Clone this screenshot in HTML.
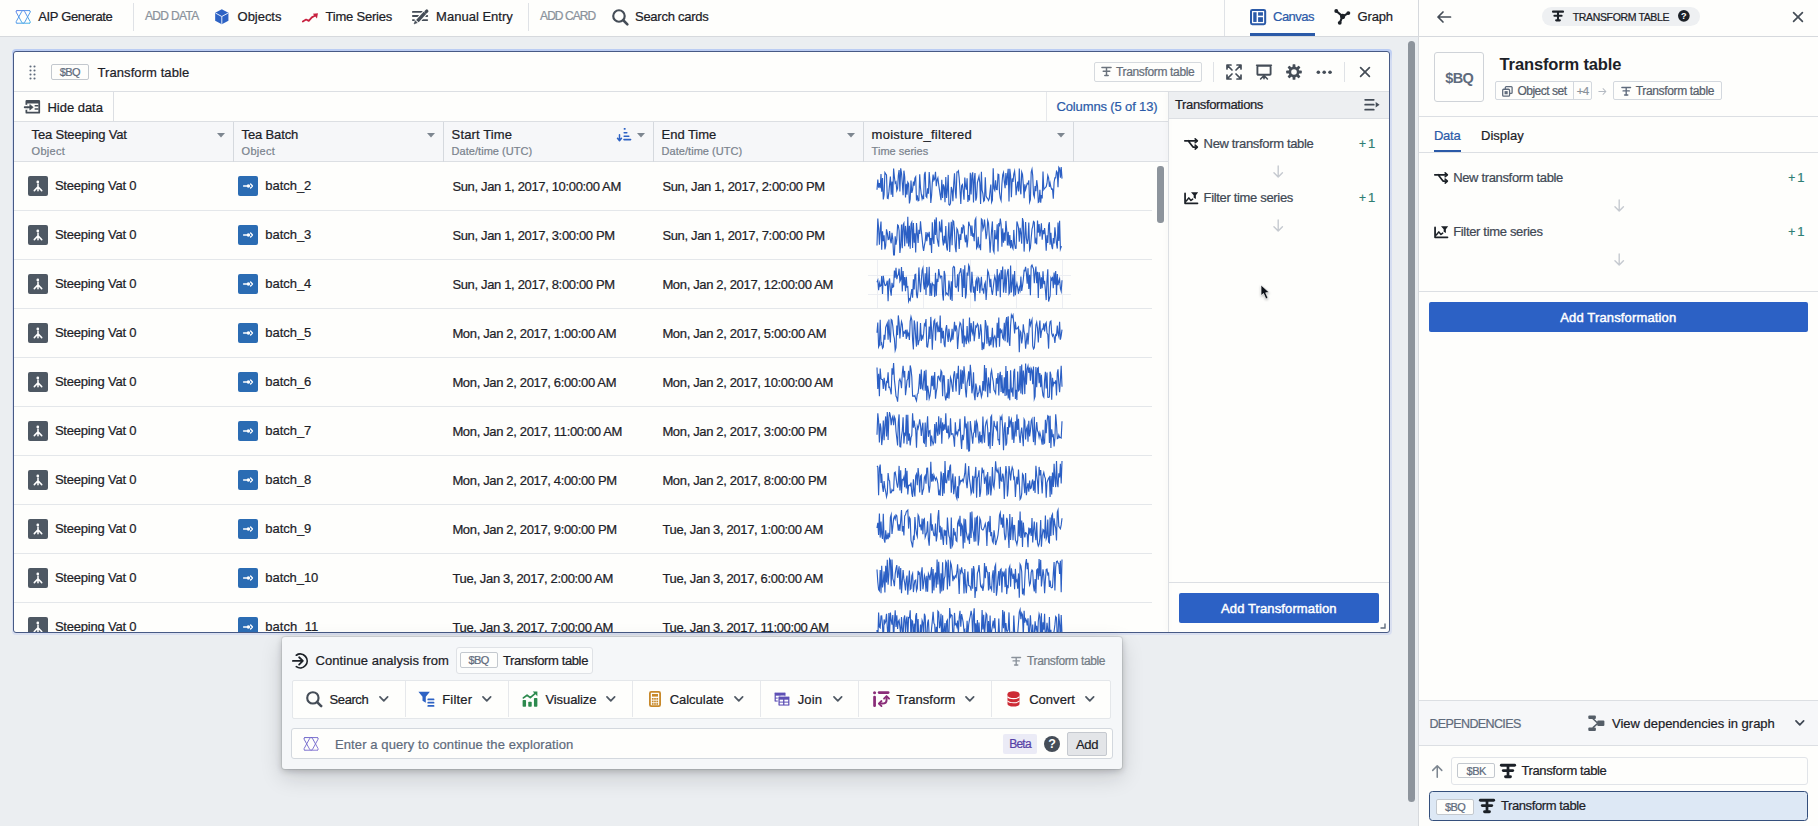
<!DOCTYPE html>
<html lang="en"><head><meta charset="utf-8"><title>Transform table</title>
<style>
html,body{margin:0;padding:0}
body{width:1818px;height:826px;position:relative;overflow:hidden;background:#ebeef1;font-family:"Liberation Sans", "DejaVu Sans", sans-serif;font-size:13px;color:#1c2127}
body div,body svg,body span{position:absolute;box-sizing:border-box}
body span{white-space:pre;-webkit-text-stroke:0.22px}
svg{overflow:visible}
</style></head>
<body>
<div style="left:0px;top:0px;width:1818px;height:37px;background:#fefefc;border-bottom:1px solid #d6d9dd"></div>
<svg style="left:15px;top:10px;" width="16.4" height="13.8" viewBox="0 0 16 14"><defs><linearGradient id="ga15" x1="0" y1="0" x2="1" y2="1"><stop offset="0" stop-color="#5b7fe8"/><stop offset="1" stop-color="#46b4e8"/></linearGradient></defs><g fill="none" stroke="url(#ga15)" stroke-width="1.0" stroke-linecap="round" stroke-linejoin="round"><path d="M1.6 0.6H14.4M1.6 13.4H14.4"/><path d="M1.6 0.6Q0.2 0.8 0.9 2.2L6.6 12.6Q7 13.4 7.6 13.4M7.6 0.6Q7 0.6 6.6 1.4L0.9 11.8Q0.2 13.2 1.6 13.4"/><path d="M14.4 0.6Q15.8 0.8 15.1 2.2L9.4 12.6Q9 13.4 8.4 13.4M8.4 0.6Q9 0.6 9.4 1.4L15.1 11.8Q15.8 13.2 14.4 13.4"/></g></svg>
<span style="left:38.30px;top:9.00px;font-size:13px;line-height:16px;color:#1c2127;letter-spacing:-0.362px;">AIP Generate</span>
<div style="left:133px;top:3px;width:1px;height:28px;background:#dfe2e6"></div>
<span style="left:145.00px;top:8.00px;font-size:12px;line-height:16px;color:#8a929b;letter-spacing:-0.676px;">ADD DATA</span>
<svg style="left:214.4px;top:8.8px;" width="15.6" height="15.6" viewBox="0 0 16 16"><path d="M8 0.3L14.8 3.9V12.1L8 15.7L1.2 12.1V3.9Z" fill="#2d62c4"/><path d="M1.6 4.2L8 7.7L14.4 4.2M8 7.7V15.3" fill="none" stroke="#e8effa" stroke-width="1"/></svg>
<span style="left:237.60px;top:9.00px;font-size:13px;line-height:16px;color:#1c2127;letter-spacing:-0.040px;">Objects</span>
<svg style="left:302px;top:9.6px;" width="16.4" height="16.4" viewBox="0 0 16 16"><path d="M0.8 11.3L4 9.3L6.6 10.6L9.6 7.2L12.6 5.6" fill="none" stroke="#c8213f" stroke-width="1.7" stroke-linecap="round" stroke-linejoin="round"/><path d="M10.6 3.6L15.6 3.2L14.6 8.2Z" fill="#c8213f"/></svg>
<span style="left:325.50px;top:9.00px;font-size:13px;line-height:16px;color:#1c2127;letter-spacing:-0.207px;">Time Series</span>
<svg style="left:412px;top:9.9px;" width="16" height="14" viewBox="0 0 16 14"><g stroke="#454d57" stroke-width="1.9" stroke-linecap="round"><path d="M0.9 1.9H10M0.9 6H6.2M14 6H15.2M0.9 10.1H2M10.2 10.1H15.2"/></g><path d="M12.9 2.9L5.4 11.1" stroke="#fefefc" stroke-width="5.4" stroke-linecap="butt"/><path d="M12.9 2.9L5.4 11.1" stroke="#454d57" stroke-width="3.5" stroke-linecap="butt"/><path d="M14 1.9L14.8 1.1" stroke="#454d57" stroke-width="3.3" stroke-linecap="round"/><path d="M2 14L3.2 10.7L5.3 12.7Z" fill="#454d57" stroke="#454d57" stroke-width="0.5" stroke-linejoin="round"/></svg>
<span style="left:436.10px;top:9.00px;font-size:13px;line-height:16px;color:#1c2127;letter-spacing:0.009px;">Manual Entry</span>
<div style="left:528px;top:3px;width:1px;height:28px;background:#dfe2e6"></div>
<span style="left:540.10px;top:8.00px;font-size:12px;line-height:16px;color:#8a929b;letter-spacing:-0.959px;">ADD CARD</span>
<svg style="left:612px;top:9px;" width="16.4" height="16.4" viewBox="0 0 16 16"><circle cx="6.8" cy="6.8" r="5.6" fill="none" stroke="#454d57" stroke-width="2.1"/><path d="M11 11L15 15" stroke="#454d57" stroke-width="2.5" stroke-linecap="round"/></svg>
<span style="left:635.00px;top:9.00px;font-size:13px;line-height:16px;color:#1c2127;letter-spacing:-0.266px;">Search cards</span>
<div style="left:1224px;top:0px;width:1px;height:36px;background:#dfe2e6"></div>
<svg style="left:1250px;top:9px;" width="16.2" height="16.2" viewBox="0 0 16 16"><rect x="1" y="1" width="14" height="14" rx="1.3" fill="#fff" stroke="#2b5aa8" stroke-width="2"/><rect x="3.2" y="3.2" width="3.3" height="9.6" fill="#2b5aa8"/><rect x="8" y="3.2" width="4.8" height="3.4" fill="#2b5aa8"/><rect x="8" y="8.1" width="4.8" height="4.7" fill="#2b5aa8"/></svg>
<span style="left:1273.00px;top:9.00px;font-size:13px;line-height:16px;color:#2b5aa8;letter-spacing:-0.513px;">Canvas</span>
<div style="left:1250px;top:33px;width:65px;height:3px;background:#2b5aa8"></div>
<svg style="left:1334px;top:8.6px;" width="16.4" height="16.4" viewBox="0 0 16 16"><path d="M2.2 1.9L8.4 7.2L14 4M8.4 7.2L5.6 13.4" fill="none" stroke="#1c2127" stroke-width="2.1"/><circle cx="2.2" cy="1.9" r="1.9" fill="#1c2127"/><circle cx="14" cy="4" r="1.9" fill="#1c2127"/><circle cx="5.6" cy="13.5" r="1.9" fill="#1c2127"/><circle cx="8.4" cy="7.2" r="2.5" fill="#1c2127"/></svg>
<span style="left:1357.60px;top:9.00px;font-size:13px;line-height:16px;color:#1c2127;letter-spacing:-0.188px;">Graph</span>
<div style="left:1408px;top:41px;width:7px;height:760.5px;background:#8d949c;border-radius:4px"></div>
<div style="left:11.5px;top:49px;width:1380px;height:585.5px;border-radius:4px;background:linear-gradient(#b9cbf3,#d3dcf2 12px,#d9dff0)"></div>
<div style="left:13px;top:51px;width:1377px;height:582px;border-radius:3px;background:#fefefc;border:1px solid #475a85"></div>
<div style="left:14px;top:52px;width:1375px;height:580px;overflow:hidden;border-radius:2px">
<svg style="left:15px;top:12.9px;" width="7" height="15" viewBox="0 0 7 15"><circle cx="1.5" cy="1.5" r="1.05" fill="#5f6b7c"/><circle cx="1.5" cy="5.5" r="1.05" fill="#5f6b7c"/><circle cx="1.5" cy="9.5" r="1.05" fill="#5f6b7c"/><circle cx="1.5" cy="13.5" r="1.05" fill="#5f6b7c"/><circle cx="5.5" cy="1.5" r="1.05" fill="#5f6b7c"/><circle cx="5.5" cy="5.5" r="1.05" fill="#5f6b7c"/><circle cx="5.5" cy="9.5" r="1.05" fill="#5f6b7c"/><circle cx="5.5" cy="13.5" r="1.05" fill="#5f6b7c"/></svg>
<div style="left:37.4px;top:12.4px;width:37.2px;height:15.2px;border:1px solid #c3c8ce;border-radius:2px;background:#fefefc"></div>
<span style="left:45.75px;top:12.00px;font-size:11px;line-height:16px;color:#5f6b7c;letter-spacing:-0.572px;">$BQ</span>
<span style="left:83.50px;top:13.00px;font-size:13px;line-height:16px;color:#1c2127;letter-spacing:0.082px;">Transform table</span>
<div style="left:1080.4px;top:10.3px;width:107.2px;height:19.5px;border:1px solid #d6dade;border-radius:2px;background:#fefefc"></div>
<svg style="left:1086.8px;top:14.2px;" width="11" height="11" viewBox="0 0 16 16"><g stroke="#6b737d" stroke-linecap="round" fill="none"><path d="M1.4 2.2H14.6" stroke-width="2.30"/><path d="M3.2 7.6H12.8" stroke-width="2.10"/><path d="M5.6 13.8H10.4" stroke-width="2.30"/><path d="M8 2.6V13.4" stroke-width="2.10"/></g></svg>
<span style="left:1102.00px;top:12.00px;font-size:12px;line-height:16px;color:#656e79;letter-spacing:-0.346px;">Transform table</span>
<div style="left:1199px;top:10px;width:1px;height:20px;background:#dfe2e6"></div>
<svg style="left:1212px;top:12px;" width="16" height="16" viewBox="0 0 16 16"><g fill="none" stroke="#454d57" stroke-width="1.7" stroke-linecap="round" stroke-linejoin="round"><path d="M1 5V1H5M1.3 1.3L6 6M11 1H15V5M14.7 1.3L10 6M1 11V15H5M1.3 14.7L6 10M15 11V15H11M14.7 14.7L10 10"/></g></svg>
<svg style="left:1242.2px;top:12px;" width="16" height="16" viewBox="0 0 16 16"><rect x="1.4" y="1.9" width="13.2" height="8.8" rx="0.8" fill="none" stroke="#454d57" stroke-width="1.9"/><path d="M0.6 1.2H15.4" stroke="#454d57" stroke-width="1.6" stroke-linecap="round"/><path d="M8 11V14.8M8 11.5L4.6 15M8 11.5L11.4 15" fill="none" stroke="#454d57" stroke-width="1.6" stroke-linecap="round"/></svg>
<svg style="left:1272px;top:12px;" width="16" height="16" viewBox="0 0 16 16"><rect x="6.6" y="0.2" width="2.8" height="4" rx="0.6" fill="#454d57" transform="rotate(0 8 8)"/><rect x="6.6" y="0.2" width="2.8" height="4" rx="0.6" fill="#454d57" transform="rotate(45 8 8)"/><rect x="6.6" y="0.2" width="2.8" height="4" rx="0.6" fill="#454d57" transform="rotate(90 8 8)"/><rect x="6.6" y="0.2" width="2.8" height="4" rx="0.6" fill="#454d57" transform="rotate(135 8 8)"/><rect x="6.6" y="0.2" width="2.8" height="4" rx="0.6" fill="#454d57" transform="rotate(180 8 8)"/><rect x="6.6" y="0.2" width="2.8" height="4" rx="0.6" fill="#454d57" transform="rotate(225 8 8)"/><rect x="6.6" y="0.2" width="2.8" height="4" rx="0.6" fill="#454d57" transform="rotate(270 8 8)"/><rect x="6.6" y="0.2" width="2.8" height="4" rx="0.6" fill="#454d57" transform="rotate(315 8 8)"/><circle cx="8" cy="8" r="4.1" fill="none" stroke="#454d57" stroke-width="2.6"/></svg>
<svg style="left:1301.6px;top:12px;" width="16.4" height="16.4" viewBox="0 0 16 16"><circle cx="2.3" cy="8" r="1.75" fill="#454d57"/><circle cx="8" cy="8" r="1.75" fill="#454d57"/><circle cx="13.7" cy="8" r="1.75" fill="#454d57"/></svg>
<div style="left:1330px;top:10px;width:1px;height:20px;background:#dfe2e6"></div>
<svg style="left:1343px;top:12px;" width="16" height="16" viewBox="0 0 16 16"><path d="M3.6 3.6L12.4 12.4M12.4 3.6L3.6 12.4" stroke="#454d57" stroke-width="1.7" stroke-linecap="round"/></svg>
<div style="left:0px;top:39px;width:1375px;height:1px;background:#dcdfe3"></div>
<svg style="left:10.6px;top:47.2px;" width="15.6" height="15.6" viewBox="0 0 16 16"><path fill-rule="evenodd" d="M1.7 1H14.3A1.2 1.2 0 0 1 15.5 2.2V13.8A1.2 1.2 0 0 1 14.3 15H1.7A1.2 1.2 0 0 1 0.5 13.8V2.2A1.2 1.2 0 0 1 1.7 1ZM2.3 4.5V13.2H13.7V4.5Z" fill="#454d57"/><rect x="0" y="6" width="2.6" height="5" fill="#fefefc"/><path d="M-0.3 8.5H6" stroke="#454d57" stroke-width="1.9" stroke-linecap="round"/><path d="M4.9 5.6L8.5 8.5L4.9 11.4Z" fill="#454d57" stroke="#454d57" stroke-width="0.6" stroke-linejoin="round"/><path d="M9.9 7H13.8M9.9 10.2H13.8" stroke="#454d57" stroke-width="1.5"/></svg>
<span style="left:33.50px;top:48.00px;font-size:13px;line-height:16px;color:#1c2127;letter-spacing:-0.028px;">Hide data</span>
<div style="left:99px;top:40px;width:1px;height:30px;background:#dcdfe3"></div>
<div style="left:1032px;top:40px;width:1px;height:29px;background:#e6e8eb"></div>
<span style="left:1042.50px;top:47.00px;font-size:13px;line-height:16px;color:#2b5aa8;letter-spacing:-0.137px;">Columns (5 of 13)</span>
<div style="left:0px;top:69px;width:1154.5px;height:41px;background:#f6f7f9;border-top:1px solid #dcdfe3;border-bottom:1px solid #dcdfe3"></div>
<span style="left:17.60px;top:75.00px;font-size:13px;line-height:16px;color:#1c2127;letter-spacing:-0.185px;">Tea Steeping Vat</span>
<span style="left:17.60px;top:91.00px;font-size:11px;line-height:16px;color:#7a838d;letter-spacing:0.284px;">Object</span>
<div style="left:219.4px;top:70px;width:1px;height:39.5px;background:#d5d9de"></div>
<svg style="left:203px;top:81px;" width="8" height="5" viewBox="0 0 8 5"><path d="M0 0H8L4 4.6Z" fill="#7d8690"/></svg>
<span style="left:227.60px;top:75.00px;font-size:13px;line-height:16px;color:#1c2127;letter-spacing:-0.148px;">Tea Batch</span>
<span style="left:227.60px;top:91.00px;font-size:11px;line-height:16px;color:#7a838d;letter-spacing:0.284px;">Object</span>
<div style="left:429.4px;top:70px;width:1px;height:39.5px;background:#d5d9de"></div>
<svg style="left:413px;top:81px;" width="8" height="5" viewBox="0 0 8 5"><path d="M0 0H8L4 4.6Z" fill="#7d8690"/></svg>
<span style="left:437.60px;top:75.00px;font-size:13px;line-height:16px;color:#1c2127;letter-spacing:0.125px;">Start Time</span>
<span style="left:437.60px;top:91.00px;font-size:11px;line-height:16px;color:#7a838d;letter-spacing:0.036px;">Date/time (UTC)</span>
<div style="left:639.4px;top:70px;width:1px;height:39.5px;background:#d5d9de"></div>
<svg style="left:623px;top:81px;" width="8" height="5" viewBox="0 0 8 5"><path d="M0 0H8L4 4.6Z" fill="#7d8690"/></svg>
<span style="left:647.60px;top:75.00px;font-size:13px;line-height:16px;color:#1c2127;letter-spacing:-0.040px;">End Time</span>
<span style="left:647.60px;top:91.00px;font-size:11px;line-height:16px;color:#7a838d;letter-spacing:0.036px;">Date/time (UTC)</span>
<div style="left:849.4px;top:70px;width:1px;height:39.5px;background:#d5d9de"></div>
<svg style="left:833px;top:81px;" width="8" height="5" viewBox="0 0 8 5"><path d="M0 0H8L4 4.6Z" fill="#7d8690"/></svg>
<span style="left:857.60px;top:75.00px;font-size:13px;line-height:16px;color:#1c2127;letter-spacing:0.258px;">moisture_filtered</span>
<span style="left:857.60px;top:91.00px;font-size:11px;line-height:16px;color:#7a838d;letter-spacing:0.015px;">Time series</span>
<div style="left:1059.4px;top:70px;width:1px;height:39.5px;background:#d5d9de"></div>
<svg style="left:1043px;top:81px;" width="8" height="5" viewBox="0 0 8 5"><path d="M0 0H8L4 4.6Z" fill="#7d8690"/></svg>
<svg style="left:602.8px;top:75.5px;" width="14.4" height="13.6" viewBox="0 0 14.4 13.6"><path d="M2.5 6.8V12.4M0.5 10.3L2.5 12.7L4.5 10.3" fill="none" stroke="#2d62c4" stroke-width="1.5" stroke-linecap="round" stroke-linejoin="round"/><g stroke="#2d62c4" stroke-width="1.6" stroke-linecap="round"><path d="M7.4 0.9H8M7.2 4.7H9.8M7.2 8.2H11.8M7 11.6H13.6"/></g></svg>
<svg style="left:14px;top:124px;" width="20" height="20" viewBox="0 0 20 20"><rect width="20" height="20" rx="2" fill="#4e5863"/><circle cx="9.8" cy="5.9" r="1.35" fill="#fff"/><path d="M10 8V11.6M10 10.8L6.3 14.6M10 10.8L13.7 14.6M10 11V14.8" fill="none" stroke="#fff" stroke-width="1.55" stroke-linecap="round"/></svg>
<span style="left:40.90px;top:126.00px;font-size:13px;line-height:16px;color:#1c2127;letter-spacing:-0.202px;">Steeping Vat 0</span>
<svg style="left:224px;top:124px;" width="20" height="20" viewBox="0 0 20 20"><rect width="20" height="20" rx="2" fill="#2b6cb3"/><path d="M5.6 10H8.6" stroke="#fff" stroke-width="1.4" stroke-linecap="round"/><circle cx="10.4" cy="10" r="1.75" fill="#fff"/><path d="M12.6 8L14.5 10L12.6 12" fill="none" stroke="#fff" stroke-width="1.3" stroke-linecap="round" stroke-linejoin="round"/></svg>
<span style="left:251.30px;top:126.00px;font-size:13px;line-height:16px;color:#1c2127;letter-spacing:-0.038px;">batch_2</span>
<span style="left:438.40px;top:127.00px;font-size:13px;line-height:16px;color:#1c2127;letter-spacing:-0.345px;">Sun, Jan 1, 2017, 10:00:00 AM</span>
<span style="left:648.40px;top:127.00px;font-size:13px;line-height:16px;color:#1c2127;letter-spacing:-0.344px;">Sun, Jan 1, 2017, 2:00:00 PM</span>
<svg style="left:863px;top:113.5px;" width="185" height="41" viewBox="0 0 185 41"><polyline points="0.0,23.7 0.8,13.6 1.6,21.7 2.4,17.1 3.2,22.2 4.0,8.1 4.7,25.8 5.5,12.1 6.3,33.4 7.1,28.8 7.9,6.6 8.7,7.9 9.5,8.9 10.3,32.1 11.1,32.6 11.9,25.9 12.6,18.4 13.4,10.5 14.2,28.7 15.0,15.5 15.8,31.0 16.6,2.6 17.4,11.0 18.2,17.2 19.0,16.0 19.8,24.6 20.6,22.5 21.3,9.5 22.1,4.0 22.9,25.6 23.7,2.3 24.5,7.0 25.3,17.1 26.1,29.2 26.9,4.7 27.7,10.7 28.5,31.5 29.3,17.9 30.0,28.8 30.8,16.3 31.6,17.7 32.4,37.5 33.2,33.1 34.0,14.6 34.8,26.9 35.6,23.9 36.4,15.5 37.2,19.7 37.9,12.2 38.7,10.8 39.5,34.5 40.3,29.4 41.1,34.9 41.9,34.4 42.7,8.3 43.5,21.9 44.3,28.2 45.1,33.0 45.9,30.3 46.6,33.2 47.4,8.5 48.2,5.8 49.0,30.4 49.8,31.4 50.6,22.2 51.4,27.7 52.2,6.1 53.0,16.5 53.8,36.9 54.6,29.2 55.3,16.9 56.1,8.5 56.9,14.4 57.7,12.9 58.5,5.9 59.3,20.1 60.1,13.9 60.9,11.8 61.7,18.5 62.5,24.1 63.2,29.2 64.0,34.2 64.8,13.7 65.6,31.9 66.4,18.3 67.2,21.2 68.0,36.2 68.8,11.1 69.6,31.9 70.4,24.0 71.2,8.9 71.9,38.4 72.7,39.1 73.5,37.4 74.3,21.0 75.1,24.0 75.9,35.1 76.7,18.3 77.5,7.3 78.3,25.1 79.1,32.5 79.9,6.1 80.6,6.0 81.4,4.8 82.2,12.1 83.0,24.1 83.8,38.0 84.6,19.6 85.4,18.5 86.2,25.3 87.0,33.8 87.8,11.5 88.5,19.6 89.3,23.6 90.1,12.3 90.9,36.0 91.7,29.1 92.5,34.4 93.3,6.7 94.1,28.4 94.9,9.4 95.7,6.3 96.5,36.4 97.2,13.7 98.0,7.0 98.8,34.7 99.6,31.4 100.4,16.6 101.2,13.5 102.0,10.3 102.8,16.8 103.6,38.1 104.4,5.8 105.1,24.1 105.9,27.7 106.7,35.4 107.5,34.4 108.3,11.3 109.1,30.1 109.9,31.8 110.7,32.5 111.5,34.4 112.3,32.5 113.1,24.9 113.8,18.6 114.6,36.2 115.4,34.1 116.2,2.2 117.0,22.7 117.8,24.5 118.6,14.2 119.4,23.6 120.2,23.7 121.0,8.2 121.8,8.6 122.5,26.4 123.3,32.1 124.1,34.6 124.9,18.3 125.7,8.9 126.5,6.5 127.3,15.8 128.1,22.3 128.9,7.1 129.7,19.1 130.4,9.6 131.2,2.8 132.0,35.4 132.8,2.7 133.6,9.6 134.4,31.3 135.2,12.4 136.0,16.0 136.8,8.2 137.6,5.1 138.4,14.2 139.1,29.3 139.9,21.2 140.7,15.6 141.5,25.5 142.3,2.5 143.1,22.9 143.9,28.3 144.7,6.1 145.5,8.4 146.3,18.4 147.1,32.2 147.8,18.3 148.6,23.6 149.4,20.4 150.2,17.4 151.0,17.9 151.8,14.3 152.6,36.1 153.4,33.7 154.2,6.1 155.0,3.3 155.7,9.5 156.5,28.4 157.3,31.0 158.1,20.1 158.9,25.1 159.7,14.2 160.5,19.7 161.3,36.3 162.1,35.6 162.9,23.9 163.7,36.8 164.4,29.0 165.2,32.4 166.0,5.5 166.8,23.6 167.6,22.3 168.4,21.6 169.2,20.7 170.0,17.2 170.8,9.5 171.6,11.9 172.4,20.8 173.1,17.0 173.9,21.1 174.7,23.2 175.5,23.0 176.3,32.7 177.1,16.2 177.9,11.8 178.7,11.8 179.5,5.3 180.3,6.4 181.0,21.2 181.8,1.2 182.6,2.4 183.4,11.8 184.2,1.0 185.0,12.6" fill="none" stroke="#2b5fc4" stroke-width="1.15" stroke-linejoin="miter" stroke-miterlimit="6"/></svg>
<div style="left:0px;top:158px;width:1138px;height:1px;background:#e4e7ea"></div>
<svg style="left:14px;top:173px;" width="20" height="20" viewBox="0 0 20 20"><rect width="20" height="20" rx="2" fill="#4e5863"/><circle cx="9.8" cy="5.9" r="1.35" fill="#fff"/><path d="M10 8V11.6M10 10.8L6.3 14.6M10 10.8L13.7 14.6M10 11V14.8" fill="none" stroke="#fff" stroke-width="1.55" stroke-linecap="round"/></svg>
<span style="left:40.90px;top:175.00px;font-size:13px;line-height:16px;color:#1c2127;letter-spacing:-0.202px;">Steeping Vat 0</span>
<svg style="left:224px;top:173px;" width="20" height="20" viewBox="0 0 20 20"><rect width="20" height="20" rx="2" fill="#2b6cb3"/><path d="M5.6 10H8.6" stroke="#fff" stroke-width="1.4" stroke-linecap="round"/><circle cx="10.4" cy="10" r="1.75" fill="#fff"/><path d="M12.6 8L14.5 10L12.6 12" fill="none" stroke="#fff" stroke-width="1.3" stroke-linecap="round" stroke-linejoin="round"/></svg>
<span style="left:251.30px;top:175.00px;font-size:13px;line-height:16px;color:#1c2127;letter-spacing:-0.038px;">batch_3</span>
<span style="left:438.40px;top:176.00px;font-size:13px;line-height:16px;color:#1c2127;letter-spacing:-0.344px;">Sun, Jan 1, 2017, 3:00:00 PM</span>
<span style="left:648.40px;top:176.00px;font-size:13px;line-height:16px;color:#1c2127;letter-spacing:-0.344px;">Sun, Jan 1, 2017, 7:00:00 PM</span>
<svg style="left:863px;top:162.5px;" width="185" height="41" viewBox="0 0 185 41"><polyline points="0.0,30.5 0.8,3.5 1.6,13.1 2.4,29.8 3.2,14.9 4.0,6.6 4.7,34.7 5.5,16.3 6.3,26.1 7.1,20.4 7.9,34.5 8.7,30.8 9.5,14.3 10.3,17.8 11.1,24.6 11.9,24.1 12.6,16.0 13.4,25.1 14.2,28.3 15.0,17.9 15.8,24.1 16.6,40.0 17.4,40.0 18.2,21.2 19.0,29.6 19.8,24.2 20.6,10.0 21.3,10.6 22.1,15.5 22.9,38.0 23.7,30.7 24.5,9.5 25.3,33.3 26.1,10.0 26.9,8.2 27.7,31.2 28.5,10.9 29.3,19.2 30.0,28.4 30.8,1.7 31.6,31.4 32.4,10.8 33.2,33.7 34.0,9.0 34.8,7.2 35.6,33.0 36.4,8.0 37.2,27.8 37.9,18.2 38.7,37.5 39.5,8.1 40.3,18.1 41.1,27.9 41.9,14.9 42.7,19.0 43.5,6.2 44.3,15.9 45.1,23.1 45.9,31.6 46.6,35.8 47.4,30.3 48.2,26.5 49.0,17.1 49.8,26.3 50.6,19.0 51.4,20.8 52.2,16.9 53.0,30.1 53.8,23.0 54.6,37.9 55.3,7.3 56.1,24.3 56.9,28.9 57.7,4.6 58.5,19.9 59.3,2.4 60.1,22.6 60.9,27.7 61.7,31.7 62.5,6.4 63.2,14.5 64.0,17.4 64.8,4.6 65.6,24.8 66.4,30.5 67.2,20.7 68.0,28.4 68.8,11.0 69.6,32.0 70.4,35.5 71.2,19.1 71.9,7.4 72.7,36.9 73.5,21.9 74.3,6.8 75.1,30.2 75.9,5.6 76.7,6.5 77.5,16.5 78.3,32.1 79.1,37.2 79.9,13.6 80.6,14.9 81.4,19.7 82.2,34.0 83.0,19.3 83.8,24.9 84.6,12.2 85.4,18.5 86.2,10.1 87.0,11.1 87.8,23.5 88.5,27.3 89.3,19.7 90.1,32.4 90.9,24.2 91.7,6.7 92.5,9.9 93.3,11.1 94.1,21.0 94.9,10.5 95.7,21.8 96.5,18.4 97.2,26.3 98.0,5.3 98.8,3.4 99.6,33.3 100.4,31.7 101.2,21.9 102.0,31.9 102.8,30.6 103.6,35.2 104.4,4.0 105.1,4.8 105.9,14.4 106.7,11.6 107.5,4.6 108.3,13.2 109.1,24.2 109.9,18.9 110.7,5.5 111.5,8.1 112.3,21.4 113.1,37.7 113.8,27.3 114.6,15.3 115.4,6.4 116.2,34.9 117.0,37.2 117.8,15.0 118.6,23.8 119.4,23.9 120.2,9.3 121.0,36.5 121.8,8.0 122.5,11.5 123.3,3.5 124.1,9.2 124.9,31.8 125.7,13.4 126.5,27.8 127.3,17.6 128.1,25.9 128.9,5.9 129.7,15.0 130.4,30.5 131.2,16.9 132.0,30.6 132.8,20.0 133.6,33.2 134.4,25.1 135.2,31.9 136.0,33.7 136.8,14.9 137.6,29.0 138.4,33.3 139.1,33.2 139.9,6.4 140.7,9.2 141.5,12.9 142.3,26.6 143.1,12.8 143.9,18.0 144.7,28.8 145.5,3.0 146.3,6.9 147.1,36.6 147.8,24.1 148.6,7.1 149.4,23.0 150.2,28.8 151.0,24.1 151.8,7.5 152.6,35.0 153.4,33.0 154.2,23.2 155.0,14.1 155.7,11.6 156.5,6.5 157.3,7.3 158.1,28.5 158.9,24.7 159.7,29.3 160.5,5.5 161.3,17.8 162.1,9.1 162.9,21.5 163.7,15.3 164.4,8.4 165.2,24.7 166.0,15.2 166.8,19.2 167.6,13.1 168.4,21.0 169.2,35.6 170.0,20.2 170.8,28.0 171.6,10.1 172.4,7.2 173.1,29.7 173.9,17.9 174.7,30.9 175.5,34.2 176.3,23.1 177.1,28.5 177.9,12.3 178.7,20.7 179.5,28.9 180.3,33.6 181.0,7.6 181.8,26.0 182.6,5.8 183.4,34.0 184.2,31.6 185.0,31.7" fill="none" stroke="#2b5fc4" stroke-width="1.15" stroke-linejoin="miter" stroke-miterlimit="6"/></svg>
<div style="left:0px;top:207px;width:1138px;height:1px;background:#e4e7ea"></div>
<svg style="left:14px;top:222px;" width="20" height="20" viewBox="0 0 20 20"><rect width="20" height="20" rx="2" fill="#4e5863"/><circle cx="9.8" cy="5.9" r="1.35" fill="#fff"/><path d="M10 8V11.6M10 10.8L6.3 14.6M10 10.8L13.7 14.6M10 11V14.8" fill="none" stroke="#fff" stroke-width="1.55" stroke-linecap="round"/></svg>
<span style="left:40.90px;top:224.00px;font-size:13px;line-height:16px;color:#1c2127;letter-spacing:-0.202px;">Steeping Vat 0</span>
<svg style="left:224px;top:222px;" width="20" height="20" viewBox="0 0 20 20"><rect width="20" height="20" rx="2" fill="#2b6cb3"/><path d="M5.6 10H8.6" stroke="#fff" stroke-width="1.4" stroke-linecap="round"/><circle cx="10.4" cy="10" r="1.75" fill="#fff"/><path d="M12.6 8L14.5 10L12.6 12" fill="none" stroke="#fff" stroke-width="1.3" stroke-linecap="round" stroke-linejoin="round"/></svg>
<span style="left:251.30px;top:224.00px;font-size:13px;line-height:16px;color:#1c2127;letter-spacing:-0.038px;">batch_4</span>
<span style="left:438.40px;top:225.00px;font-size:13px;line-height:16px;color:#1c2127;letter-spacing:-0.344px;">Sun, Jan 1, 2017, 8:00:00 PM</span>
<span style="left:648.40px;top:225.00px;font-size:13px;line-height:16px;color:#1c2127;letter-spacing:-0.349px;">Mon, Jan 2, 2017, 12:00:00 AM</span>
<div style="left:862.8px;top:207.5px;width:1px;height:48px;background:#eceef2"></div>
<div style="left:909.2px;top:207.5px;width:1px;height:48px;background:#eceef2"></div>
<div style="left:955.6px;top:207.5px;width:1px;height:48px;background:#eceef2"></div>
<div style="left:1001.8px;top:207.5px;width:1px;height:48px;background:#eceef2"></div>
<div style="left:1048px;top:207.5px;width:1px;height:48px;background:#eceef2"></div>
<div style="left:854px;top:222.7px;width:203px;height:1px;background:#eceef2"></div>
<div style="left:854px;top:241.6px;width:203px;height:1px;background:#eceef2"></div>
<svg style="left:863px;top:211.5px;" width="185" height="41" viewBox="0 0 185 41"><polyline points="0.0,18.2 0.8,16.2 1.6,26.3 2.4,19.1 3.2,22.4 4.0,21.6 4.7,12.1 5.5,30.0 6.3,11.9 7.1,17.5 7.9,21.3 8.7,21.5 9.5,19.7 10.3,16.7 11.1,37.2 11.9,17.2 12.6,14.5 13.4,26.2 14.2,31.7 15.0,18.8 15.8,23.2 16.6,22.6 17.4,6.5 18.2,13.6 19.0,3.7 19.8,15.2 20.6,11.7 21.3,10.7 22.1,4.7 22.9,17.4 23.7,15.7 24.5,3.0 25.3,27.4 26.1,7.0 26.9,21.5 27.7,13.1 28.5,27.2 29.3,12.8 30.0,23.0 30.8,22.6 31.6,37.2 32.4,34.9 33.2,36.2 34.0,30.1 34.8,25.1 35.6,33.7 36.4,15.2 37.2,25.5 37.9,10.9 38.7,10.3 39.5,30.3 40.3,34.1 41.1,24.7 41.9,3.4 42.7,18.5 43.5,28.1 44.3,16.8 45.1,6.3 45.9,4.0 46.6,20.0 47.4,25.5 48.2,9.2 49.0,30.9 49.8,3.0 50.6,22.1 51.4,20.6 52.2,2.8 53.0,31.9 53.8,19.3 54.6,31.8 55.3,19.2 56.1,20.9 56.9,20.8 57.7,32.9 58.5,8.7 59.3,31.7 60.1,14.8 60.9,18.0 61.7,5.1 62.5,10.5 63.2,13.9 64.0,12.1 64.8,12.4 65.6,30.1 66.4,36.6 67.2,6.9 68.0,10.9 68.8,30.5 69.6,29.1 70.4,30.1 71.2,31.2 71.9,16.5 72.7,23.7 73.5,35.7 74.3,17.3 75.1,37.0 75.9,4.0 76.7,2.5 77.5,3.3 78.3,22.6 79.1,23.5 79.9,21.9 80.6,10.2 81.4,27.7 82.2,9.4 83.0,8.0 83.8,4.1 84.6,12.5 85.4,32.9 86.2,5.2 87.0,24.1 87.8,1.2 88.5,34.4 89.3,29.8 90.1,8.5 90.9,11.7 91.7,1.0 92.5,3.1 93.3,25.6 94.1,28.5 94.9,7.8 95.7,19.9 96.5,28.7 97.2,22.5 98.0,37.2 98.8,17.3 99.6,15.1 100.4,27.0 101.2,13.4 102.0,14.6 102.8,29.2 103.6,20.8 104.4,12.7 105.1,25.8 105.9,25.1 106.7,29.7 107.5,20.7 108.3,18.5 109.1,35.9 109.9,24.6 110.7,6.7 111.5,8.7 112.3,14.3 113.1,23.1 113.8,14.9 114.6,27.0 115.4,31.0 116.2,24.0 117.0,17.3 117.8,12.2 118.6,15.5 119.4,31.8 120.2,5.1 121.0,27.3 121.8,11.8 122.5,10.4 123.3,33.3 124.1,6.1 124.9,15.2 125.7,2.6 126.5,28.6 127.3,21.5 128.1,5.4 128.9,28.9 129.7,14.0 130.4,8.2 131.2,5.0 132.0,29.9 132.8,28.5 133.6,1.4 134.4,28.5 135.2,19.2 136.0,10.4 136.8,32.6 137.6,7.0 138.4,31.2 139.1,23.1 139.9,19.3 140.7,24.2 141.5,29.8 142.3,23.6 143.1,26.3 143.9,12.5 144.7,27.0 145.5,21.9 146.3,15.5 147.1,6.4 147.8,6.8 148.6,2.8 149.4,9.3 150.2,19.7 151.0,4.3 151.8,25.0 152.6,10.7 153.4,31.2 154.2,2.2 155.0,1.0 155.7,3.0 156.5,4.8 157.3,19.3 158.1,9.4 158.9,2.6 159.7,19.1 160.5,7.8 161.3,33.9 162.1,8.2 162.9,12.8 163.7,25.0 164.4,13.2 165.2,24.2 166.0,7.4 166.8,20.2 167.6,16.7 168.4,26.2 169.2,36.1 170.0,16.2 170.8,5.3 171.6,37.6 172.4,34.7 173.1,32.0 173.9,14.1 174.7,15.8 175.5,12.7 176.3,24.3 177.1,8.6 177.9,20.7 178.7,7.0 179.5,31.1 180.3,10.1 181.0,21.0 181.8,17.5 182.6,15.0 183.4,24.3 184.2,27.2 185.0,16.3" fill="none" stroke="#2b5fc4" stroke-width="1.15" stroke-linejoin="miter" stroke-miterlimit="6"/></svg>
<div style="left:0px;top:256px;width:1138px;height:1px;background:#e4e7ea"></div>
<svg style="left:14px;top:271px;" width="20" height="20" viewBox="0 0 20 20"><rect width="20" height="20" rx="2" fill="#4e5863"/><circle cx="9.8" cy="5.9" r="1.35" fill="#fff"/><path d="M10 8V11.6M10 10.8L6.3 14.6M10 10.8L13.7 14.6M10 11V14.8" fill="none" stroke="#fff" stroke-width="1.55" stroke-linecap="round"/></svg>
<span style="left:40.90px;top:273.00px;font-size:13px;line-height:16px;color:#1c2127;letter-spacing:-0.202px;">Steeping Vat 0</span>
<svg style="left:224px;top:271px;" width="20" height="20" viewBox="0 0 20 20"><rect width="20" height="20" rx="2" fill="#2b6cb3"/><path d="M5.6 10H8.6" stroke="#fff" stroke-width="1.4" stroke-linecap="round"/><circle cx="10.4" cy="10" r="1.75" fill="#fff"/><path d="M12.6 8L14.5 10L12.6 12" fill="none" stroke="#fff" stroke-width="1.3" stroke-linecap="round" stroke-linejoin="round"/></svg>
<span style="left:251.30px;top:273.00px;font-size:13px;line-height:16px;color:#1c2127;letter-spacing:-0.038px;">batch_5</span>
<span style="left:438.40px;top:274.00px;font-size:13px;line-height:16px;color:#1c2127;letter-spacing:-0.347px;">Mon, Jan 2, 2017, 1:00:00 AM</span>
<span style="left:648.40px;top:274.00px;font-size:13px;line-height:16px;color:#1c2127;letter-spacing:-0.347px;">Mon, Jan 2, 2017, 5:00:00 AM</span>
<svg style="left:863px;top:260.5px;" width="185" height="41" viewBox="0 0 185 41"><polyline points="0.0,19.7 0.8,9.6 1.6,33.9 2.4,32.1 3.2,6.8 4.0,31.3 4.7,30.2 5.5,35.3 6.3,34.1 7.1,21.7 7.9,26.7 8.7,14.3 9.5,12.3 10.3,10.2 11.1,26.8 11.9,6.5 12.6,21.7 13.4,29.4 14.2,6.5 15.0,7.3 15.8,13.4 16.6,22.1 17.4,25.7 18.2,37.3 19.0,34.7 19.8,12.6 20.6,22.1 21.3,2.4 22.1,9.8 22.9,25.4 23.7,15.2 24.5,8.6 25.3,11.4 26.1,24.0 26.9,19.0 27.7,20.0 28.5,16.8 29.3,26.0 30.0,16.5 30.8,22.6 31.6,20.5 32.4,27.0 33.2,8.3 34.0,3.7 34.8,6.8 35.6,27.1 36.4,36.4 37.2,7.4 37.9,11.8 38.7,24.9 39.5,33.6 40.3,8.5 41.1,32.1 41.9,28.1 42.7,26.4 43.5,10.0 44.3,28.0 45.1,23.1 45.9,25.2 46.6,20.9 47.4,11.1 48.2,12.4 49.0,6.1 49.8,33.7 50.6,34.1 51.4,27.9 52.2,13.5 53.0,26.1 53.8,3.9 54.6,17.7 55.3,36.7 56.1,18.2 56.9,8.1 57.7,6.7 58.5,27.6 59.3,10.5 60.1,9.6 60.9,19.2 61.7,14.6 62.5,19.1 63.2,2.4 64.0,30.3 64.8,14.8 65.6,25.4 66.4,17.9 67.2,31.3 68.0,34.2 68.8,16.4 69.6,12.0 70.4,22.3 71.2,28.9 71.9,15.8 72.7,23.3 73.5,28.1 74.3,26.8 75.1,15.9 75.9,26.7 76.7,18.8 77.5,8.9 78.3,18.5 79.1,12.3 79.9,16.9 80.6,35.9 81.4,24.8 82.2,14.7 83.0,9.6 83.8,10.9 84.6,17.5 85.4,30.5 86.2,5.7 87.0,34.1 87.8,22.6 88.5,25.6 89.3,31.2 90.1,13.1 90.9,27.0 91.7,28.9 92.5,4.5 93.3,28.5 94.1,10.1 94.9,18.2 95.7,20.7 96.5,8.2 97.2,28.2 98.0,21.1 98.8,13.0 99.6,13.9 100.4,10.9 101.2,12.5 102.0,25.9 102.8,21.1 103.6,11.4 104.4,18.1 105.1,37.1 105.9,29.4 106.7,36.1 107.5,29.6 108.3,7.0 109.1,11.1 109.9,30.7 110.7,12.5 111.5,27.9 112.3,33.2 113.1,24.1 113.8,32.2 114.6,26.2 115.4,14.7 116.2,34.5 117.0,24.6 117.8,22.9 118.6,26.0 119.4,34.5 120.2,9.8 121.0,25.0 121.8,4.5 122.5,33.8 123.3,15.4 124.1,19.0 124.9,17.4 125.7,24.8 126.5,26.0 127.3,9.7 128.1,28.2 128.9,8.3 129.7,4.0 130.4,29.5 131.2,3.3 132.0,27.9 132.8,33.0 133.6,12.5 134.4,2.1 135.2,4.1 136.0,2.1 136.8,10.2 137.6,20.5 138.4,8.9 139.1,15.9 139.9,16.0 140.7,14.9 141.5,13.9 142.3,39.2 143.1,17.9 143.9,19.5 144.7,30.4 145.5,24.4 146.3,11.2 147.1,19.0 147.8,21.7 148.6,35.7 149.4,28.2 150.2,19.8 151.0,31.5 151.8,20.3 152.6,5.8 153.4,12.2 154.2,9.1 155.0,6.6 155.7,32.9 156.5,35.9 157.3,34.8 158.1,24.9 158.9,12.2 159.7,9.3 160.5,15.1 161.3,29.4 162.1,15.9 162.9,7.6 163.7,25.0 164.4,19.1 165.2,16.0 166.0,16.3 166.8,10.3 167.6,18.4 168.4,11.1 169.2,9.6 170.0,19.9 170.8,21.5 171.6,35.6 172.4,13.7 173.1,8.7 173.9,8.0 174.7,20.2 175.5,23.2 176.3,21.5 177.1,23.6 177.9,30.0 178.7,21.7 179.5,22.4 180.3,12.5 181.0,20.6 181.8,23.3 182.6,8.8 183.4,26.6 184.2,22.7 185.0,16.7" fill="none" stroke="#2b5fc4" stroke-width="1.15" stroke-linejoin="miter" stroke-miterlimit="6"/></svg>
<div style="left:0px;top:305px;width:1138px;height:1px;background:#e4e7ea"></div>
<svg style="left:14px;top:320px;" width="20" height="20" viewBox="0 0 20 20"><rect width="20" height="20" rx="2" fill="#4e5863"/><circle cx="9.8" cy="5.9" r="1.35" fill="#fff"/><path d="M10 8V11.6M10 10.8L6.3 14.6M10 10.8L13.7 14.6M10 11V14.8" fill="none" stroke="#fff" stroke-width="1.55" stroke-linecap="round"/></svg>
<span style="left:40.90px;top:322.00px;font-size:13px;line-height:16px;color:#1c2127;letter-spacing:-0.202px;">Steeping Vat 0</span>
<svg style="left:224px;top:320px;" width="20" height="20" viewBox="0 0 20 20"><rect width="20" height="20" rx="2" fill="#2b6cb3"/><path d="M5.6 10H8.6" stroke="#fff" stroke-width="1.4" stroke-linecap="round"/><circle cx="10.4" cy="10" r="1.75" fill="#fff"/><path d="M12.6 8L14.5 10L12.6 12" fill="none" stroke="#fff" stroke-width="1.3" stroke-linecap="round" stroke-linejoin="round"/></svg>
<span style="left:251.30px;top:322.00px;font-size:13px;line-height:16px;color:#1c2127;letter-spacing:-0.038px;">batch_6</span>
<span style="left:438.40px;top:323.00px;font-size:13px;line-height:16px;color:#1c2127;letter-spacing:-0.347px;">Mon, Jan 2, 2017, 6:00:00 AM</span>
<span style="left:648.40px;top:323.00px;font-size:13px;line-height:16px;color:#1c2127;letter-spacing:-0.349px;">Mon, Jan 2, 2017, 10:00:00 AM</span>
<svg style="left:863px;top:309.5px;" width="185" height="41" viewBox="0 0 185 41"><polyline points="0.0,5.6 0.8,26.9 1.6,11.7 2.4,34.3 3.2,6.5 4.0,16.6 4.7,17.5 5.5,17.5 6.3,26.9 7.1,15.9 7.9,21.9 8.7,28.7 9.5,19.7 10.3,20.3 11.1,10.4 11.9,25.4 12.6,25.2 13.4,28.0 14.2,32.3 15.0,6.3 15.8,12.7 16.6,1.0 17.4,17.6 18.2,25.1 19.0,34.1 19.8,35.7 20.6,39.7 21.3,29.7 22.1,18.8 22.9,17.0 23.7,19.8 24.5,26.3 25.3,11.7 26.1,3.8 26.9,15.5 27.7,8.9 28.5,33.3 29.3,26.1 30.0,18.5 30.8,16.9 31.6,8.7 32.4,25.6 33.2,3.4 34.0,7.0 34.8,14.9 35.6,34.0 36.4,33.9 37.2,34.3 37.9,33.5 38.7,36.8 39.5,38.8 40.3,32.2 41.1,31.3 41.9,23.8 42.7,11.8 43.5,27.3 44.3,7.6 45.1,26.0 45.9,27.4 46.6,17.6 47.4,8.8 48.2,28.7 49.0,7.7 49.8,38.3 50.6,23.7 51.4,28.4 52.2,36.6 53.0,33.7 53.8,27.1 54.6,13.7 55.3,24.3 56.1,13.5 56.9,27.6 57.7,10.1 58.5,36.8 59.3,29.7 60.1,25.5 60.9,14.5 61.7,14.1 62.5,17.6 63.2,18.8 64.0,8.5 64.8,10.1 65.6,34.2 66.4,13.7 67.2,14.0 68.0,33.6 68.8,38.5 69.6,32.8 70.4,36.1 71.2,17.0 71.9,36.6 72.7,27.0 73.5,15.4 74.3,18.1 75.1,24.8 75.9,29.9 76.7,13.2 77.5,9.2 78.3,17.7 79.1,29.5 79.9,11.2 80.6,16.8 81.4,3.7 82.2,32.9 83.0,26.5 83.8,7.5 84.6,27.1 85.4,8.4 86.2,21.6 87.0,4.4 87.8,14.0 88.5,28.4 89.3,35.5 90.1,21.1 90.9,16.6 91.7,9.4 92.5,24.0 93.3,2.8 94.1,12.0 94.9,31.3 95.7,25.9 96.5,10.3 97.2,32.2 98.0,38.2 98.8,21.6 99.6,25.5 100.4,35.0 101.2,31.6 102.0,30.4 102.8,23.2 103.6,29.7 104.4,34.9 105.1,32.1 105.9,19.0 106.7,28.7 107.5,2.9 108.3,29.4 109.1,6.1 109.9,21.2 110.7,35.2 111.5,15.4 112.3,22.5 113.1,31.3 113.8,11.8 114.6,8.4 115.4,15.1 116.2,19.3 117.0,28.0 117.8,29.6 118.6,31.4 119.4,16.2 120.2,21.6 121.0,11.0 121.8,33.6 122.5,14.4 123.3,9.8 124.1,29.9 124.9,13.0 125.7,30.6 126.5,30.6 127.3,15.3 128.1,33.9 128.9,4.0 129.7,33.5 130.4,8.9 131.2,36.4 132.0,27.4 132.8,38.3 133.6,8.3 134.4,30.4 135.2,27.6 136.0,34.8 136.8,9.8 137.6,6.8 138.4,37.0 139.1,27.9 139.9,38.1 140.7,9.6 141.5,28.7 142.3,27.8 143.1,3.9 143.9,31.4 144.7,2.6 145.5,32.4 146.3,8.5 147.1,16.5 147.8,32.1 148.6,1.4 149.4,22.6 150.2,6.8 151.0,3.9 151.8,10.9 152.6,5.5 153.4,18.8 154.2,6.4 155.0,8.3 155.7,22.1 156.5,4.6 157.3,36.8 158.1,34.5 158.9,5.0 159.7,25.3 160.5,6.5 161.3,5.6 162.1,21.2 162.9,11.0 163.7,25.1 164.4,12.8 165.2,27.2 166.0,33.8 166.8,35.1 167.6,18.1 168.4,9.8 169.2,26.5 170.0,10.5 170.8,35.2 171.6,35.4 172.4,34.9 173.1,9.7 173.9,13.1 174.7,37.7 175.5,15.7 176.3,23.0 177.1,20.5 177.9,21.1 178.7,18.3 179.5,33.5 180.3,11.0 181.0,7.4 181.8,21.2 182.6,30.1 183.4,18.1 184.2,3.8 185.0,24.8" fill="none" stroke="#2b5fc4" stroke-width="1.15" stroke-linejoin="miter" stroke-miterlimit="6"/></svg>
<div style="left:0px;top:354px;width:1138px;height:1px;background:#e4e7ea"></div>
<svg style="left:14px;top:369px;" width="20" height="20" viewBox="0 0 20 20"><rect width="20" height="20" rx="2" fill="#4e5863"/><circle cx="9.8" cy="5.9" r="1.35" fill="#fff"/><path d="M10 8V11.6M10 10.8L6.3 14.6M10 10.8L13.7 14.6M10 11V14.8" fill="none" stroke="#fff" stroke-width="1.55" stroke-linecap="round"/></svg>
<span style="left:40.90px;top:371.00px;font-size:13px;line-height:16px;color:#1c2127;letter-spacing:-0.202px;">Steeping Vat 0</span>
<svg style="left:224px;top:369px;" width="20" height="20" viewBox="0 0 20 20"><rect width="20" height="20" rx="2" fill="#2b6cb3"/><path d="M5.6 10H8.6" stroke="#fff" stroke-width="1.4" stroke-linecap="round"/><circle cx="10.4" cy="10" r="1.75" fill="#fff"/><path d="M12.6 8L14.5 10L12.6 12" fill="none" stroke="#fff" stroke-width="1.3" stroke-linecap="round" stroke-linejoin="round"/></svg>
<span style="left:251.30px;top:371.00px;font-size:13px;line-height:16px;color:#1c2127;letter-spacing:-0.038px;">batch_7</span>
<span style="left:438.40px;top:372.00px;font-size:13px;line-height:16px;color:#1c2127;letter-spacing:-0.347px;">Mon, Jan 2, 2017, 11:00:00 AM</span>
<span style="left:648.40px;top:372.00px;font-size:13px;line-height:16px;color:#1c2127;letter-spacing:-0.348px;">Mon, Jan 2, 2017, 3:00:00 PM</span>
<svg style="left:863px;top:358.5px;" width="185" height="41" viewBox="0 0 185 41"><polyline points="0.0,23.8 0.8,2.3 1.6,10.0 2.4,31.6 3.2,12.4 4.0,17.2 4.7,34.1 5.5,26.6 6.3,9.5 7.1,29.3 7.9,14.0 8.7,5.4 9.5,25.4 10.3,1.0 11.1,29.0 11.9,6.3 12.6,1.0 13.4,5.4 14.2,14.3 15.0,7.5 15.8,5.5 16.6,14.2 17.4,5.8 18.2,7.8 19.0,20.3 19.8,27.2 20.6,34.5 21.3,11.6 22.1,3.4 22.9,35.6 23.7,35.9 24.5,25.2 25.3,19.9 26.1,6.3 26.9,32.4 27.7,22.8 28.5,24.0 29.3,3.8 30.0,33.3 30.8,3.7 31.6,29.8 32.4,22.6 33.2,34.5 34.0,26.5 34.8,24.5 35.6,2.2 36.4,16.7 37.2,9.5 37.9,15.4 38.7,18.6 39.5,36.7 40.3,15.2 41.1,17.6 41.9,14.1 42.7,8.3 43.5,13.7 44.3,24.9 45.1,16.9 45.9,11.7 46.6,31.2 47.4,32.1 48.2,11.4 49.0,35.9 49.8,17.2 50.6,5.3 51.4,25.8 52.2,20.0 53.0,19.5 53.8,35.3 54.6,24.6 55.3,29.7 56.1,33.3 56.9,31.2 57.7,13.1 58.5,32.4 59.3,11.1 60.1,19.9 60.9,24.8 61.7,5.3 62.5,23.4 63.2,15.7 64.0,6.9 64.8,32.7 65.6,11.4 66.4,19.7 67.2,13.2 68.0,18.6 68.8,2.2 69.6,21.4 70.4,21.7 71.2,14.5 71.9,26.7 72.7,25.2 73.5,7.2 74.3,23.4 75.1,22.8 75.9,22.8 76.7,27.1 77.5,35.8 78.3,11.2 79.1,22.9 79.9,21.4 80.6,23.9 81.4,19.0 82.2,19.5 83.0,7.7 83.8,26.9 84.6,38.0 85.4,23.9 86.2,29.2 87.0,22.7 87.8,5.3 88.5,15.2 89.3,12.6 90.1,38.5 90.9,10.5 91.7,40.0 92.5,39.8 93.3,10.1 94.1,17.2 94.9,24.8 95.7,32.8 96.5,22.2 97.2,21.3 98.0,9.6 98.8,26.5 99.6,10.5 100.4,13.1 101.2,24.5 102.0,32.5 102.8,20.5 103.6,31.3 104.4,24.0 105.1,32.5 105.9,5.5 106.7,23.8 107.5,31.7 108.3,15.5 109.1,11.2 109.9,9.4 110.7,18.2 111.5,35.3 112.3,21.2 113.1,37.7 113.8,6.1 114.6,4.6 115.4,34.9 116.2,24.3 117.0,9.9 117.8,15.2 118.6,15.8 119.4,18.3 120.2,10.3 121.0,28.8 121.8,28.5 122.5,33.9 123.3,6.3 124.1,7.9 124.9,5.4 125.7,17.8 126.5,39.3 127.3,17.5 128.1,11.2 128.9,34.7 129.7,32.1 130.4,15.9 131.2,23.4 132.0,5.4 132.8,16.4 133.6,10.5 134.4,8.3 135.2,28.8 136.0,11.0 136.8,32.0 137.6,22.1 138.4,10.3 139.1,25.5 139.9,3.4 140.7,18.9 141.5,7.7 142.3,24.4 143.1,32.0 143.9,22.1 144.7,16.6 145.5,25.4 146.3,35.3 147.1,8.4 147.8,10.0 148.6,28.5 149.4,18.0 150.2,15.5 151.0,30.7 151.8,9.8 152.6,25.4 153.4,20.0 154.2,10.0 155.0,8.0 155.7,19.9 156.5,31.1 157.3,5.8 158.1,34.2 158.9,21.1 159.7,11.0 160.5,19.9 161.3,21.3 162.1,26.2 162.9,21.8 163.7,25.0 164.4,29.0 165.2,33.7 166.0,18.8 166.8,32.8 167.6,32.0 168.4,8.8 169.2,22.1 170.0,10.8 170.8,4.8 171.6,5.6 172.4,31.9 173.1,4.8 173.9,37.1 174.7,18.3 175.5,25.2 176.3,24.1 177.1,35.5 177.9,27.4 178.7,3.3 179.5,13.0 180.3,27.6 181.0,27.3 181.8,24.1 182.6,26.5 183.4,26.4 184.2,26.9 185.0,10.2" fill="none" stroke="#2b5fc4" stroke-width="1.15" stroke-linejoin="miter" stroke-miterlimit="6"/></svg>
<div style="left:0px;top:403px;width:1138px;height:1px;background:#e4e7ea"></div>
<svg style="left:14px;top:418px;" width="20" height="20" viewBox="0 0 20 20"><rect width="20" height="20" rx="2" fill="#4e5863"/><circle cx="9.8" cy="5.9" r="1.35" fill="#fff"/><path d="M10 8V11.6M10 10.8L6.3 14.6M10 10.8L13.7 14.6M10 11V14.8" fill="none" stroke="#fff" stroke-width="1.55" stroke-linecap="round"/></svg>
<span style="left:40.90px;top:420.00px;font-size:13px;line-height:16px;color:#1c2127;letter-spacing:-0.202px;">Steeping Vat 0</span>
<svg style="left:224px;top:418px;" width="20" height="20" viewBox="0 0 20 20"><rect width="20" height="20" rx="2" fill="#2b6cb3"/><path d="M5.6 10H8.6" stroke="#fff" stroke-width="1.4" stroke-linecap="round"/><circle cx="10.4" cy="10" r="1.75" fill="#fff"/><path d="M12.6 8L14.5 10L12.6 12" fill="none" stroke="#fff" stroke-width="1.3" stroke-linecap="round" stroke-linejoin="round"/></svg>
<span style="left:251.30px;top:420.00px;font-size:13px;line-height:16px;color:#1c2127;letter-spacing:-0.038px;">batch_8</span>
<span style="left:438.40px;top:421.00px;font-size:13px;line-height:16px;color:#1c2127;letter-spacing:-0.348px;">Mon, Jan 2, 2017, 4:00:00 PM</span>
<span style="left:648.40px;top:421.00px;font-size:13px;line-height:16px;color:#1c2127;letter-spacing:-0.348px;">Mon, Jan 2, 2017, 8:00:00 PM</span>
<svg style="left:863px;top:407.5px;" width="185" height="41" viewBox="0 0 185 41"><polyline points="0.0,5.9 0.8,7.0 1.6,35.2 2.4,8.4 3.2,4.6 4.0,22.9 4.7,13.9 5.5,26.7 6.3,31.9 7.1,21.1 7.9,27.9 8.7,31.7 9.5,36.8 10.3,33.4 11.1,13.1 11.9,19.8 12.6,20.9 13.4,32.9 14.2,32.8 15.0,29.6 15.8,30.8 16.6,30.5 17.4,12.8 18.2,12.1 19.0,17.1 19.8,23.3 20.6,27.7 21.3,22.8 22.1,5.9 22.9,30.5 23.7,10.3 24.5,33.2 25.3,19.5 26.1,19.9 26.9,17.1 27.7,27.2 28.5,8.1 29.3,28.5 30.0,10.7 30.8,34.5 31.6,25.4 32.4,25.0 33.2,25.7 34.0,22.6 34.8,33.4 35.6,36.9 36.4,19.2 37.2,31.4 37.9,36.5 38.7,15.8 39.5,14.1 40.3,25.3 41.1,8.0 41.9,16.0 42.7,32.4 43.5,16.3 44.3,15.2 45.1,35.0 45.9,30.9 46.6,28.8 47.4,17.5 48.2,15.7 49.0,23.6 49.8,8.3 50.6,8.2 51.4,24.6 52.2,32.7 53.0,25.6 53.8,1.7 54.6,21.8 55.3,13.9 56.1,21.5 56.9,15.2 57.7,18.0 58.5,20.0 59.3,17.6 60.1,19.6 60.9,24.0 61.7,35.1 62.5,31.6 63.2,35.7 64.0,11.6 64.8,16.8 65.6,35.9 66.4,12.9 67.2,33.6 68.0,1.0 68.8,22.6 69.6,22.8 70.4,16.9 71.2,10.1 71.9,20.7 72.7,7.4 73.5,4.6 74.3,32.7 75.1,21.0 75.9,13.5 76.7,34.2 77.5,27.6 78.3,16.4 79.1,36.2 79.9,38.6 80.6,26.4 81.4,38.3 82.2,15.9 83.0,23.5 83.8,20.7 84.6,21.1 85.4,19.4 86.2,21.7 87.0,17.9 87.8,13.2 88.5,3.2 89.3,22.3 90.1,28.2 90.9,16.7 91.7,6.1 92.5,19.5 93.3,24.7 94.1,33.6 94.9,31.2 95.7,15.7 96.5,33.5 97.2,17.1 98.0,17.0 98.8,6.9 99.6,37.8 100.4,17.8 101.2,16.2 102.0,10.3 102.8,36.9 103.6,32.2 104.4,18.4 105.1,7.5 105.9,12.1 106.7,10.8 107.5,23.8 108.3,18.4 109.1,16.4 109.9,35.4 110.7,12.0 111.5,34.4 112.3,24.1 113.1,16.3 113.8,35.5 114.6,27.7 115.4,7.0 116.2,25.1 117.0,27.7 117.8,18.1 118.6,1.3 119.4,10.3 120.2,12.0 121.0,9.3 121.8,14.4 122.5,28.7 123.3,6.9 124.1,20.7 124.9,21.2 125.7,13.6 126.5,17.3 127.3,38.9 128.1,20.1 128.9,6.1 129.7,12.5 130.4,36.5 131.2,28.3 132.0,6.1 132.8,12.1 133.6,20.5 134.4,11.7 135.2,7.2 136.0,9.5 136.8,18.8 137.6,17.4 138.4,36.9 139.1,24.9 139.9,16.9 140.7,24.4 141.5,9.5 142.3,22.2 143.1,39.3 143.9,38.0 144.7,33.9 145.5,14.0 146.3,15.3 147.1,25.9 147.8,33.3 148.6,13.1 149.4,35.2 150.2,27.9 151.0,23.2 151.8,31.7 152.6,20.5 153.4,28.6 154.2,27.9 155.0,22.2 155.7,19.5 156.5,30.7 157.3,20.9 158.1,32.9 158.9,5.7 159.7,15.0 160.5,21.5 161.3,34.1 162.1,6.9 162.9,15.3 163.7,10.1 164.4,21.1 165.2,33.4 166.0,15.3 166.8,12.4 167.6,16.4 168.4,18.5 169.2,37.8 170.0,22.5 170.8,20.3 171.6,18.2 172.4,17.0 173.1,37.0 173.9,16.0 174.7,34.4 175.5,12.5 176.3,27.0 177.1,3.7 177.9,18.9 178.7,27.1 179.5,1.0 180.3,23.7 181.0,27.2 181.8,13.4 182.6,17.5 183.4,3.8 184.2,23.6 185.0,1.0" fill="none" stroke="#2b5fc4" stroke-width="1.15" stroke-linejoin="miter" stroke-miterlimit="6"/></svg>
<div style="left:0px;top:452px;width:1138px;height:1px;background:#e4e7ea"></div>
<svg style="left:14px;top:467px;" width="20" height="20" viewBox="0 0 20 20"><rect width="20" height="20" rx="2" fill="#4e5863"/><circle cx="9.8" cy="5.9" r="1.35" fill="#fff"/><path d="M10 8V11.6M10 10.8L6.3 14.6M10 10.8L13.7 14.6M10 11V14.8" fill="none" stroke="#fff" stroke-width="1.55" stroke-linecap="round"/></svg>
<span style="left:40.90px;top:469.00px;font-size:13px;line-height:16px;color:#1c2127;letter-spacing:-0.202px;">Steeping Vat 0</span>
<svg style="left:224px;top:467px;" width="20" height="20" viewBox="0 0 20 20"><rect width="20" height="20" rx="2" fill="#2b6cb3"/><path d="M5.6 10H8.6" stroke="#fff" stroke-width="1.4" stroke-linecap="round"/><circle cx="10.4" cy="10" r="1.75" fill="#fff"/><path d="M12.6 8L14.5 10L12.6 12" fill="none" stroke="#fff" stroke-width="1.3" stroke-linecap="round" stroke-linejoin="round"/></svg>
<span style="left:251.30px;top:469.00px;font-size:13px;line-height:16px;color:#1c2127;letter-spacing:-0.038px;">batch_9</span>
<span style="left:438.40px;top:470.00px;font-size:13px;line-height:16px;color:#1c2127;letter-spacing:-0.348px;">Mon, Jan 2, 2017, 9:00:00 PM</span>
<span style="left:648.40px;top:470.00px;font-size:13px;line-height:16px;color:#1c2127;letter-spacing:-0.340px;">Tue, Jan 3, 2017, 1:00:00 AM</span>
<svg style="left:863px;top:456.5px;" width="185" height="41" viewBox="0 0 185 41"><polyline points="0.0,19.0 0.8,13.8 1.6,26.0 2.4,4.5 3.2,28.6 4.0,12.6 4.7,25.4 5.5,30.0 6.3,4.8 7.1,30.5 7.9,33.7 8.7,21.4 9.5,30.5 10.3,26.1 11.1,30.2 11.9,23.9 12.6,28.4 13.4,8.3 14.2,5.7 15.0,25.0 15.8,17.6 16.6,9.8 17.4,7.6 18.2,10.1 19.0,5.9 19.8,6.8 20.6,15.4 21.3,21.6 22.1,15.3 22.9,22.0 23.7,11.2 24.5,1.0 25.3,22.6 26.1,17.1 26.9,26.5 27.7,6.9 28.5,5.8 29.3,2.7 30.0,1.8 30.8,1.0 31.6,19.6 32.4,8.5 33.2,10.0 34.0,31.3 34.8,34.3 35.6,38.4 36.4,28.4 37.2,31.1 37.9,8.0 38.7,18.9 39.5,24.9 40.3,27.5 41.1,5.9 41.9,7.7 42.7,17.1 43.5,16.3 44.3,21.4 45.1,9.5 45.9,25.3 46.6,10.7 47.4,9.7 48.2,28.1 49.0,25.7 49.8,23.1 50.6,12.4 51.4,30.5 52.2,36.7 53.0,18.9 53.8,4.4 54.6,21.7 55.3,15.3 56.1,22.0 56.9,26.3 57.7,26.6 58.5,14.6 59.3,32.5 60.1,26.8 60.9,8.1 61.7,1.0 62.5,23.5 63.2,16.8 64.0,30.8 64.8,18.4 65.6,28.3 66.4,36.0 67.2,20.7 68.0,26.6 68.8,21.4 69.6,35.8 70.4,8.6 71.2,19.8 71.9,26.8 72.7,29.1 73.5,39.7 74.3,8.4 75.1,37.4 75.9,35.4 76.7,19.0 77.5,25.4 78.3,24.0 79.1,31.5 79.9,32.4 80.6,14.5 81.4,11.8 82.2,17.4 83.0,6.8 83.8,27.3 84.6,15.5 85.4,17.1 86.2,39.4 87.0,9.6 87.8,33.7 88.5,10.2 89.3,22.8 90.1,27.8 90.9,30.1 91.7,26.8 92.5,35.0 93.3,3.3 94.1,29.1 94.9,2.6 95.7,20.8 96.5,24.6 97.2,32.8 98.0,8.5 98.8,32.6 99.6,8.8 100.4,7.7 101.2,36.6 102.0,29.9 102.8,9.3 103.6,11.3 104.4,19.2 105.1,20.7 105.9,21.1 106.7,19.8 107.5,17.5 108.3,14.8 109.1,19.1 109.9,37.0 110.7,13.8 111.5,13.0 112.3,23.1 113.1,6.9 113.8,27.2 114.6,23.1 115.4,32.1 116.2,33.8 117.0,21.3 117.8,27.5 118.6,36.0 119.4,32.7 120.2,29.8 121.0,25.8 121.8,18.5 122.5,6.0 123.3,3.6 124.1,15.7 124.9,8.6 125.7,18.6 126.5,5.4 127.3,23.6 128.1,31.2 128.9,27.4 129.7,8.8 130.4,11.3 131.2,25.9 132.0,38.9 132.8,5.1 133.6,30.9 134.4,19.1 135.2,8.1 136.0,31.2 136.8,16.5 137.6,16.6 138.4,31.1 139.1,32.5 139.9,35.6 140.7,31.1 141.5,11.3 142.3,27.4 143.1,2.6 143.9,29.0 144.7,11.6 145.5,38.0 146.3,13.5 147.1,22.9 147.8,28.5 148.6,23.6 149.4,24.1 150.2,25.4 151.0,38.2 151.8,18.6 152.6,23.4 153.4,19.2 154.2,26.9 155.0,9.1 155.7,33.5 156.5,21.5 157.3,12.5 158.1,24.5 158.9,31.3 159.7,13.2 160.5,33.9 161.3,37.0 162.1,35.0 162.9,29.0 163.7,11.0 164.4,37.8 165.2,27.0 166.0,20.5 166.8,21.2 167.6,29.4 168.4,6.5 169.2,29.6 170.0,27.1 170.8,10.6 171.6,33.0 172.4,33.8 173.1,8.5 173.9,27.1 174.7,6.8 175.5,5.1 176.3,26.2 177.1,9.2 177.9,15.7 178.7,19.1 179.5,31.4 180.3,3.0 181.0,1.0 181.8,17.2 182.6,18.5 183.4,19.7 184.2,15.9 185.0,9.2" fill="none" stroke="#2b5fc4" stroke-width="1.15" stroke-linejoin="miter" stroke-miterlimit="6"/></svg>
<div style="left:0px;top:501px;width:1138px;height:1px;background:#e4e7ea"></div>
<svg style="left:14px;top:516px;" width="20" height="20" viewBox="0 0 20 20"><rect width="20" height="20" rx="2" fill="#4e5863"/><circle cx="9.8" cy="5.9" r="1.35" fill="#fff"/><path d="M10 8V11.6M10 10.8L6.3 14.6M10 10.8L13.7 14.6M10 11V14.8" fill="none" stroke="#fff" stroke-width="1.55" stroke-linecap="round"/></svg>
<span style="left:40.90px;top:518.00px;font-size:13px;line-height:16px;color:#1c2127;letter-spacing:-0.202px;">Steeping Vat 0</span>
<svg style="left:224px;top:516px;" width="20" height="20" viewBox="0 0 20 20"><rect width="20" height="20" rx="2" fill="#2b6cb3"/><path d="M5.6 10H8.6" stroke="#fff" stroke-width="1.4" stroke-linecap="round"/><circle cx="10.4" cy="10" r="1.75" fill="#fff"/><path d="M12.6 8L14.5 10L12.6 12" fill="none" stroke="#fff" stroke-width="1.3" stroke-linecap="round" stroke-linejoin="round"/></svg>
<span style="left:251.30px;top:518.00px;font-size:13px;line-height:16px;color:#1c2127;letter-spacing:-0.062px;">batch_10</span>
<span style="left:438.40px;top:519.00px;font-size:13px;line-height:16px;color:#1c2127;letter-spacing:-0.340px;">Tue, Jan 3, 2017, 2:00:00 AM</span>
<span style="left:648.40px;top:519.00px;font-size:13px;line-height:16px;color:#1c2127;letter-spacing:-0.340px;">Tue, Jan 3, 2017, 6:00:00 AM</span>
<svg style="left:863px;top:505.5px;" width="185" height="41" viewBox="0 0 185 41"><polyline points="0.0,11.5 0.8,24.0 1.6,31.6 2.4,32.8 3.2,12.0 4.0,35.3 4.7,7.7 5.5,29.5 6.3,24.3 7.1,13.4 7.9,34.5 8.7,7.8 9.5,24.4 10.3,1.7 11.1,26.8 11.9,16.5 12.6,1.0 13.4,2.3 14.2,28.2 15.0,1.4 15.8,20.7 16.6,23.4 17.4,28.2 18.2,15.8 19.0,10.5 19.8,7.1 20.6,19.8 21.3,14.5 22.1,8.2 22.9,31.5 23.7,10.1 24.5,35.3 25.3,23.2 26.1,12.1 26.9,20.9 27.7,25.2 28.5,32.4 29.3,21.0 30.0,17.5 30.8,36.8 31.6,24.9 32.4,12.6 33.2,31.5 34.0,30.5 34.8,17.9 35.6,15.6 36.4,34.1 37.2,27.1 37.9,22.5 38.7,22.0 39.5,32.7 40.3,30.4 41.1,12.9 41.9,16.0 42.7,14.9 43.5,33.0 44.3,15.5 45.1,9.3 45.9,31.3 46.6,26.1 47.4,17.3 48.2,20.1 49.0,33.6 49.8,17.7 50.6,33.8 51.4,15.7 52.2,17.9 53.0,22.2 53.8,14.7 54.6,9.2 55.3,35.3 56.1,11.1 56.9,32.4 57.7,18.2 58.5,14.6 59.3,29.8 60.1,1.5 60.9,26.6 61.7,3.8 62.5,21.3 63.2,35.5 64.0,15.3 64.8,33.4 65.6,4.2 66.4,32.4 67.2,20.9 68.0,18.2 68.8,3.3 69.6,5.1 70.4,31.5 71.2,1.7 71.9,18.4 72.7,28.3 73.5,4.4 74.3,6.8 75.1,13.4 75.9,23.1 76.7,18.8 77.5,20.4 78.3,17.9 79.1,19.1 79.9,13.7 80.6,6.4 81.4,19.0 82.2,36.0 83.0,12.8 83.8,14.8 84.6,9.4 85.4,14.6 86.2,15.3 87.0,35.5 87.8,11.0 88.5,25.9 89.3,35.3 90.1,24.3 90.9,13.6 91.7,27.6 92.5,27.8 93.3,29.1 94.1,32.7 94.9,10.3 95.7,30.8 96.5,8.1 97.2,11.9 98.0,40.0 98.8,29.0 99.6,33.1 100.4,15.0 101.2,13.0 102.0,7.1 102.8,17.2 103.6,28.1 104.4,29.4 105.1,27.4 105.9,33.0 106.7,27.5 107.5,5.0 108.3,20.3 109.1,8.2 109.9,13.4 110.7,14.4 111.5,32.5 112.3,14.1 113.1,30.1 113.8,29.2 114.6,31.6 115.4,17.4 116.2,12.3 117.0,34.9 117.8,9.2 118.6,6.8 119.4,37.8 120.2,31.3 121.0,19.2 121.8,13.0 122.5,27.8 123.3,12.0 124.1,11.0 124.9,34.4 125.7,13.4 126.5,17.1 127.3,14.9 128.1,29.1 128.9,10.4 129.7,36.1 130.4,28.0 131.2,29.1 132.0,10.7 132.8,8.3 133.6,28.7 134.4,10.2 135.2,16.7 136.0,21.0 136.8,15.7 137.6,31.3 138.4,10.9 139.1,23.3 139.9,22.0 140.7,30.7 141.5,15.4 142.3,39.7 143.1,6.3 143.9,8.0 144.7,13.6 145.5,36.3 146.3,30.6 147.1,37.5 147.8,21.5 148.6,5.9 149.4,1.0 150.2,11.1 151.0,4.9 151.8,20.3 152.6,27.1 153.4,25.0 154.2,14.4 155.0,12.0 155.7,12.9 156.5,28.2 157.3,33.5 158.1,21.0 158.9,35.2 159.7,11.9 160.5,11.1 161.3,21.8 162.1,1.0 162.9,18.3 163.7,1.9 164.4,28.5 165.2,20.9 166.0,11.3 166.8,17.5 167.6,35.3 168.4,21.7 169.2,11.4 170.0,11.1 170.8,16.6 171.6,15.3 172.4,29.0 173.1,22.5 173.9,29.2 174.7,29.8 175.5,29.2 176.3,15.8 177.1,4.0 177.9,32.4 178.7,9.1 179.5,3.5 180.3,3.0 181.0,5.0 181.8,5.4 182.6,16.0 183.4,2.7 184.2,34.3 185.0,1.4" fill="none" stroke="#2b5fc4" stroke-width="1.15" stroke-linejoin="miter" stroke-miterlimit="6"/></svg>
<div style="left:0px;top:550px;width:1138px;height:1px;background:#e4e7ea"></div>
<svg style="left:14px;top:565px;" width="20" height="20" viewBox="0 0 20 20"><rect width="20" height="20" rx="2" fill="#4e5863"/><circle cx="9.8" cy="5.9" r="1.35" fill="#fff"/><path d="M10 8V11.6M10 10.8L6.3 14.6M10 10.8L13.7 14.6M10 11V14.8" fill="none" stroke="#fff" stroke-width="1.55" stroke-linecap="round"/></svg>
<span style="left:40.90px;top:567.00px;font-size:13px;line-height:16px;color:#1c2127;letter-spacing:-0.202px;">Steeping Vat 0</span>
<svg style="left:224px;top:565px;" width="20" height="20" viewBox="0 0 20 20"><rect width="20" height="20" rx="2" fill="#2b6cb3"/><path d="M5.6 10H8.6" stroke="#fff" stroke-width="1.4" stroke-linecap="round"/><circle cx="10.4" cy="10" r="1.75" fill="#fff"/><path d="M12.6 8L14.5 10L12.6 12" fill="none" stroke="#fff" stroke-width="1.3" stroke-linecap="round" stroke-linejoin="round"/></svg>
<span style="left:251.30px;top:567.00px;font-size:13px;line-height:16px;color:#1c2127;letter-spacing:0.059px;">batch_11</span>
<span style="left:438.40px;top:568.00px;font-size:13px;line-height:16px;color:#1c2127;letter-spacing:-0.340px;">Tue, Jan 3, 2017, 7:00:00 AM</span>
<span style="left:648.40px;top:568.00px;font-size:13px;line-height:16px;color:#1c2127;letter-spacing:-0.341px;">Tue, Jan 3, 2017, 11:00:00 AM</span>
<svg style="left:863px;top:554.5px;" width="185" height="41" viewBox="0 0 185 41"><polyline points="0.0,22.9 0.8,34.7 1.6,5.5 2.4,19.9 3.2,20.8 4.0,9.0 4.7,8.9 5.5,18.3 6.3,34.8 7.1,12.4 7.9,16.2 8.7,14.5 9.5,6.8 10.3,20.7 11.1,31.3 11.9,6.0 12.6,25.9 13.4,5.5 14.2,13.2 15.0,17.6 15.8,8.1 16.6,33.2 17.4,15.6 18.2,3.4 19.0,20.0 19.8,8.4 20.6,22.0 21.3,14.6 22.1,13.1 22.9,20.3 23.7,27.9 24.5,10.0 25.3,22.5 26.1,28.2 26.9,11.9 27.7,8.5 28.5,26.3 29.3,12.9 30.0,9.6 30.8,30.3 31.6,10.5 32.4,10.7 33.2,3.3 34.0,33.4 34.8,13.3 35.6,14.2 36.4,34.1 37.2,16.6 37.9,35.3 38.7,9.0 39.5,6.1 40.3,27.6 41.1,12.0 41.9,36.7 42.7,33.9 43.5,17.6 44.3,27.3 45.1,13.4 45.9,15.7 46.6,30.3 47.4,6.7 48.2,9.3 49.0,31.1 49.8,32.3 50.6,15.8 51.4,12.6 52.2,29.6 53.0,27.1 53.8,32.3 54.6,21.1 55.3,14.2 56.1,4.7 56.9,16.2 57.7,17.6 58.5,34.3 59.3,19.9 60.1,33.0 60.9,4.1 61.7,5.1 62.5,21.2 63.2,17.8 64.0,6.8 64.8,39.3 65.6,8.2 66.4,30.2 67.2,23.0 68.0,16.1 68.8,36.0 69.6,14.4 70.4,13.0 71.2,37.3 71.9,28.8 72.7,1.0 73.5,9.7 74.3,7.9 75.1,8.5 75.9,33.3 76.7,27.0 77.5,5.9 78.3,17.6 79.1,16.8 79.9,19.7 80.6,13.5 81.4,26.2 82.2,10.2 83.0,3.9 83.8,19.8 84.6,7.0 85.4,11.2 86.2,15.5 87.0,24.1 87.8,22.7 88.5,32.8 89.3,30.6 90.1,13.9 90.9,28.4 91.7,17.5 92.5,12.6 93.3,9.0 94.1,3.8 94.9,8.3 95.7,29.6 96.5,8.3 97.2,1.2 98.0,31.7 98.8,16.3 99.6,27.8 100.4,13.0 101.2,34.4 102.0,15.5 102.8,30.2 103.6,26.9 104.4,25.1 105.1,3.0 105.9,22.4 106.7,7.8 107.5,30.1 108.3,16.9 109.1,6.4 109.9,7.8 110.7,33.1 111.5,14.0 112.3,32.5 113.1,8.5 113.8,33.8 114.6,23.9 115.4,19.0 116.2,13.5 117.0,21.5 117.8,11.1 118.6,26.2 119.4,29.5 120.2,28.5 121.0,32.3 121.8,11.5 122.5,26.8 123.3,40.0 124.1,30.5 124.9,26.3 125.7,3.1 126.5,21.1 127.3,4.6 128.1,25.7 128.9,16.1 129.7,24.0 130.4,24.2 131.2,22.7 132.0,5.4 132.8,29.2 133.6,30.3 134.4,26.6 135.2,30.2 136.0,36.8 136.8,8.5 137.6,24.7 138.4,37.1 139.1,29.5 139.9,29.4 140.7,26.0 141.5,15.8 142.3,5.1 143.1,2.6 143.9,12.2 144.7,6.2 145.5,8.0 146.3,28.7 147.1,3.7 147.8,15.5 148.6,12.0 149.4,13.5 150.2,18.4 151.0,11.2 151.8,30.9 152.6,21.8 153.4,8.2 154.2,21.7 155.0,35.9 155.7,17.5 156.5,37.1 157.3,27.0 158.1,14.4 158.9,22.2 159.7,18.9 160.5,34.8 161.3,14.2 162.1,7.1 162.9,10.1 163.7,36.7 164.4,6.3 165.2,36.4 166.0,15.3 166.8,22.8 167.6,6.8 168.4,34.5 169.2,26.4 170.0,15.7 170.8,23.1 171.6,31.5 172.4,10.0 173.1,32.5 173.9,22.8 174.7,34.3 175.5,25.7 176.3,29.1 177.1,24.2 177.9,17.9 178.7,9.5 179.5,10.6 180.3,30.7 181.0,30.5 181.8,6.7 182.6,17.1 183.4,32.0 184.2,8.0 185.0,27.0" fill="none" stroke="#2b5fc4" stroke-width="1.15" stroke-linejoin="miter" stroke-miterlimit="6"/></svg>
<div style="left:1143.4px;top:114px;width:6.4px;height:56.5px;background:#8d949c;border-radius:3px"></div>
<div style="left:1154px;top:40px;width:1px;height:540px;background:#dcdfe3;box-shadow:-1px 0 5px rgba(17,20,24,.09)"></div>
<div style="left:1155px;top:40px;width:220.5px;height:27px;background:#edeff1;border-bottom:1px solid #dcdfe3"></div>
<span style="left:1161.00px;top:45.00px;font-size:13px;line-height:16px;color:#1c2127;letter-spacing:-0.362px;">Transformations</span>
<svg style="left:1350px;top:45.4px;" width="15.6" height="15.6" viewBox="0 0 16 16"><g stroke="#454d57" stroke-width="1.8" stroke-linecap="round"><path d="M1.2 2.9H10M1.2 7.9H10M1.2 13H10"/></g><path d="M12 5.2L16 8L12 10.8Z" fill="#454d57"/></svg>
<svg style="left:1170.2px;top:85.1px;" width="14.4" height="14.4" viewBox="0 0 16 16"><path d="M0.9 4.2H13.8M4.6 4.2L10 11.2H13.8" fill="none" stroke="#1c2127" stroke-width="1.9" stroke-linejoin="round" stroke-linecap="round"/><path d="M12.4 2L14.9 4.2L12.4 6.4M12.4 9L14.9 11.2L12.4 13.4" fill="none" stroke="#1c2127" stroke-width="1.8" stroke-linejoin="round" stroke-linecap="round"/></svg>
<span style="left:1189.60px;top:84.00px;font-size:13px;line-height:16px;color:#404854;letter-spacing:-0.344px;">New transform table</span>
<span style="left:1345.00px;top:84.00px;font-size:12px;line-height:16px;color:#2f7f74;letter-spacing:-0.393px;">+</span>
<span style="left:1354.00px;top:84.00px;font-size:13px;line-height:16px;color:#2f7f74;letter-spacing:-0.405px;">1</span>
<svg style="left:1259.2px;top:112.6px;" width="10.4" height="13.2" viewBox="0 0 11 14"><path d="M5.5 1V12.6M1 8.2L5.5 12.8L10 8.2" fill="none" stroke="#c6cad0" stroke-width="1.5" stroke-linecap="round" stroke-linejoin="round"/></svg>
<svg style="left:1170.2px;top:139.6px;" width="14.2" height="12.425" viewBox="0 0 16 14"><path d="M1.2 1.6V12.8H15.2" fill="none" stroke="#1c2127" stroke-width="2" stroke-linecap="round" stroke-linejoin="round"/><path d="M2.6 10.2L5.4 6.6L7.8 9.6L9.8 8" fill="none" stroke="#1c2127" stroke-width="1.7" stroke-linecap="round" stroke-linejoin="round"/><path d="M7.9 0.2H16L13.4 3.6V7.8L10.9 6.6V3.6Z" fill="#1c2127"/></svg>
<span style="left:1189.60px;top:138.00px;font-size:13px;line-height:16px;color:#404854;letter-spacing:-0.331px;">Filter time series</span>
<span style="left:1345.00px;top:138.00px;font-size:12px;line-height:16px;color:#2f7f74;letter-spacing:-0.393px;">+</span>
<span style="left:1354.00px;top:138.00px;font-size:13px;line-height:16px;color:#2f7f74;letter-spacing:-0.405px;">1</span>
<svg style="left:1259.2px;top:166.6px;" width="10.4" height="13.2" viewBox="0 0 11 14"><path d="M5.5 1V12.6M1 8.2L5.5 12.8L10 8.2" fill="none" stroke="#c6cad0" stroke-width="1.5" stroke-linecap="round" stroke-linejoin="round"/></svg>
<div style="left:1155px;top:530px;width:220.5px;height:1px;background:#dcdfe3"></div>
<div style="left:1165px;top:541px;width:200px;height:29.6px;background:#2c61c5;border-radius:2px"></div>
<span style="left:1207.00px;top:549.00px;font-size:13px;line-height:16px;color:#fff;-webkit-text-stroke:0.45px;letter-spacing:0.119px;">Add Transformation</span>
<svg style="left:1366.2px;top:571.4px;" width="6" height="6" viewBox="0 0 6 6"><path d="M5 0.5V5H0.5" fill="none" stroke="#5f6b7c" stroke-width="1.4"/></svg>
</div>
<div style="left:282px;top:637px;width:839.5px;height:131.5px;background:#f5f7f9;border-radius:3px;box-shadow:0 0 0 1px rgba(17,20,24,.08),0 2px 6px rgba(17,20,24,.22),0 8px 22px rgba(17,20,24,.16)"></div>
<svg style="left:292.4px;top:652.6px;" width="15.8" height="15.8" viewBox="0 0 16 16"><path d="M4.4 2.2A7 7 0 1 1 4.4 13.8" fill="none" stroke="#1c2127" stroke-width="1.8" stroke-linecap="round"/><path d="M0.9 8H10.8M7.2 4.3L11 8L7.2 11.7" fill="none" stroke="#1c2127" stroke-width="1.8" stroke-linecap="round" stroke-linejoin="round"/></svg>
<span style="left:315.60px;top:653.00px;font-size:13px;line-height:16px;color:#1c2127;letter-spacing:0.053px;">Continue analysis from</span>
<div style="left:455.6px;top:647.4px;width:137.8px;height:26.2px;border:1px solid #dfe2e6;border-radius:3px;background:#fbfcfc"></div>
<div style="left:460.4px;top:652.4px;width:37.4px;height:15.2px;border:1px solid #c3c8ce;border-radius:2px;background:#fefefc"></div>
<span style="left:468.40px;top:652.00px;font-size:11px;line-height:16px;color:#5f6b7c;letter-spacing:-0.539px;">$BQ</span>
<span style="left:503.00px;top:653.00px;font-size:13px;line-height:16px;color:#1c2127;letter-spacing:-0.371px;">Transform table</span>
<svg style="left:1011px;top:655.6px;" width="10.4" height="10.4" viewBox="0 0 16 16"><g stroke="#8a929b" stroke-linecap="round" fill="none"><path d="M1.4 2.2H14.6" stroke-width="2.30"/><path d="M3.2 7.6H12.8" stroke-width="2.10"/><path d="M5.6 13.8H10.4" stroke-width="2.30"/><path d="M8 2.6V13.4" stroke-width="2.10"/></g></svg>
<span style="left:1027.10px;top:653.00px;font-size:12px;line-height:16px;color:#737c85;letter-spacing:-0.373px;">Transform table</span>
<div style="left:292.2px;top:679.8px;width:818.4px;height:38.9px;background:#fefefc;border:1px solid #e4e7ea;border-radius:2px"></div>
<div style="left:405px;top:681px;width:1px;height:36.2px;background:#e6e8eb"></div>
<div style="left:507.9px;top:681px;width:1px;height:36.2px;background:#e6e8eb"></div>
<div style="left:631.8px;top:681px;width:1px;height:36.2px;background:#e6e8eb"></div>
<div style="left:759.8px;top:681px;width:1px;height:36.2px;background:#e6e8eb"></div>
<div style="left:858px;top:681px;width:1px;height:36.2px;background:#e6e8eb"></div>
<div style="left:990.9px;top:681px;width:1px;height:36.2px;background:#e6e8eb"></div>
<svg style="left:306px;top:691px;" width="16.2" height="16.2" viewBox="0 0 16 16"><circle cx="6.8" cy="6.8" r="5.6" fill="none" stroke="#454d57" stroke-width="2.1"/><path d="M11 11L15 15" stroke="#454d57" stroke-width="2.5" stroke-linecap="round"/></svg>
<span style="left:329.60px;top:692.00px;font-size:13px;line-height:16px;color:#1c2127;letter-spacing:-0.434px;">Search</span>
<svg style="left:378.6px;top:695.8px;" width="9.6" height="5.8" viewBox="0 0 10 6"><path d="M1 1L5 5L9 1" fill="none" stroke="#4f5863" stroke-width="1.8" stroke-linecap="round" stroke-linejoin="round"/></svg>
<svg style="left:418.4px;top:691px;" width="16.4" height="16.4" viewBox="0 0 16 16"><path d="M0.4 0.8H11.6L7.6 5.6V11.4L4.4 9.4V5.6Z" fill="#2d62c4"/><g stroke="#2d62c4" stroke-width="1.7" stroke-linecap="round"><path d="M10 8.2H15.2M10 11.4H15.2M10 14.6H15.2"/></g></svg>
<span style="left:442.20px;top:692.00px;font-size:13px;line-height:16px;color:#1c2127;letter-spacing:0.185px;">Filter</span>
<svg style="left:481.8px;top:695.8px;" width="9.6" height="5.8" viewBox="0 0 10 6"><path d="M1 1L5 5L9 1" fill="none" stroke="#4f5863" stroke-width="1.8" stroke-linecap="round" stroke-linejoin="round"/></svg>
<svg style="left:521.6px;top:691.4px;" width="16.2" height="16.2" viewBox="0 0 16 16"><rect x="0.6" y="9" width="3.4" height="6.6" rx="0.7" fill="#2d8a4e"/><rect x="6.2" y="10.6" width="3.4" height="5" rx="0.7" fill="#2d8a4e"/><rect x="11.8" y="7" width="3.4" height="8.6" rx="0.7" fill="#2d8a4e"/><path d="M1.4 6.8L5 4.2L8.2 6.6L13.4 2" fill="none" stroke="#2d8a4e" stroke-width="1.7" stroke-linecap="round" stroke-linejoin="round"/><path d="M10.6 0.6H15.2V5.2Z" fill="#2d8a4e"/></svg>
<span style="left:545.50px;top:692.00px;font-size:13px;line-height:16px;color:#1c2127;letter-spacing:-0.100px;">Visualize</span>
<svg style="left:605.6px;top:695.8px;" width="9.6" height="5.8" viewBox="0 0 10 6"><path d="M1 1L5 5L9 1" fill="none" stroke="#4f5863" stroke-width="1.8" stroke-linecap="round" stroke-linejoin="round"/></svg>
<svg style="left:649px;top:691px;" width="12" height="16" viewBox="0 0 12 16"><rect x="0.9" y="0.9" width="10.2" height="14.2" rx="1.3" fill="none" stroke="#c8892a" stroke-width="1.8"/><rect x="3" y="3" width="6" height="2.6" fill="#c8892a"/><rect x="2.9" y="7" width="1.7" height="1.7" fill="#c8892a"/><rect x="2.9" y="9.6" width="1.7" height="1.7" fill="#c8892a"/><rect x="2.9" y="12.1" width="1.7" height="1.7" fill="#c8892a"/><rect x="5.15" y="7" width="1.7" height="1.7" fill="#c8892a"/><rect x="5.15" y="9.6" width="1.7" height="1.7" fill="#c8892a"/><rect x="5.15" y="12.1" width="1.7" height="1.7" fill="#c8892a"/><rect x="7.4" y="7" width="1.7" height="1.7" fill="#c8892a"/><rect x="7.4" y="9.6" width="1.7" height="1.7" fill="#c8892a"/><rect x="7.4" y="12.1" width="1.7" height="1.7" fill="#c8892a"/></svg>
<span style="left:669.70px;top:692.00px;font-size:13px;line-height:16px;color:#1c2127;letter-spacing:-0.023px;">Calculate</span>
<svg style="left:733.6px;top:695.8px;" width="9.6" height="5.8" viewBox="0 0 10 6"><path d="M1 1L5 5L9 1" fill="none" stroke="#4f5863" stroke-width="1.8" stroke-linecap="round" stroke-linejoin="round"/></svg>
<svg style="left:774px;top:692px;" width="16" height="14" viewBox="0 0 16 14"><rect x="0.2" y="0.2" width="11.7" height="9.7" rx="1.2" fill="#5e50b5" stroke="#fff" stroke-width="0.7"/><rect x="1.8" y="3.7" width="3.4" height="1.9" fill="#fff"/><rect x="1.8" y="6.6000000000000005" width="3.4" height="1.9" fill="#fff"/><rect x="6.5" y="3.7" width="3.8" height="1.9" fill="#fff"/><rect x="6.5" y="6.6000000000000005" width="3.8" height="1.9" fill="#fff"/><rect x="4.1" y="4.2" width="11.7" height="9.7" rx="1.2" fill="#5e50b5" stroke="#fff" stroke-width="0.7"/><rect x="5.699999999999999" y="7.7" width="3.4" height="1.9" fill="#fff"/><rect x="5.699999999999999" y="10.600000000000001" width="3.4" height="1.9" fill="#fff"/><rect x="10.399999999999999" y="7.7" width="3.8" height="1.9" fill="#fff"/><rect x="10.399999999999999" y="10.600000000000001" width="3.8" height="1.9" fill="#fff"/></svg>
<span style="left:797.70px;top:692.00px;font-size:13px;line-height:16px;color:#1c2127;letter-spacing:0.185px;">Join</span>
<svg style="left:832.7px;top:695.8px;" width="9.6" height="5.8" viewBox="0 0 10 6"><path d="M1 1L5 5L9 1" fill="none" stroke="#4f5863" stroke-width="1.8" stroke-linecap="round" stroke-linejoin="round"/></svg>
<svg style="left:872.8px;top:691px;" width="16.2" height="16.2" viewBox="0 0 16 16"><rect x="0.2" y="4.6" width="2.7" height="11.2" rx="1.3" fill="#8a2d78"/><circle cx="1.55" cy="1.7" r="1.5" fill="#8a2d78"/><path d="M6 1.6H15" stroke="#8a2d78" stroke-width="2.6" stroke-linecap="round"/><path d="M6.4 12.4H9.4C12.6 12.4 13.4 10.6 13.4 8.8V6.4" fill="none" stroke="#8a2d78" stroke-width="2" stroke-linecap="round"/><path d="M10.9 7.6L13.4 5L15.9 7.6" fill="none" stroke="#8a2d78" stroke-width="1.8" stroke-linecap="round" stroke-linejoin="round"/><path d="M8.4 9.9L5.8 12.4L8.4 14.9" fill="none" stroke="#8a2d78" stroke-width="1.8" stroke-linecap="round" stroke-linejoin="round"/></svg>
<span style="left:896.30px;top:692.00px;font-size:13px;line-height:16px;color:#1c2127;letter-spacing:0.039px;">Transform</span>
<svg style="left:965.4px;top:695.8px;" width="9.6" height="5.8" viewBox="0 0 10 6"><path d="M1 1L5 5L9 1" fill="none" stroke="#4f5863" stroke-width="1.8" stroke-linecap="round" stroke-linejoin="round"/></svg>
<svg style="left:1007.4px;top:690.8px;" width="13" height="16" viewBox="0 0 13 16"><path d="M0.5 3V13C0.5 14.5 3.4 15.6 6.5 15.6C9.6 15.6 12.5 14.5 12.5 13V3Z" fill="#cd2b35"/><ellipse cx="6.5" cy="3" rx="6" ry="2.7" fill="#cd2b35"/><path d="M0.5 5.6C1.6 7.2 4 7.6 6.5 7.6C9 7.6 11.4 7.2 12.5 5.6M0.5 9.8C1.6 11.4 4 11.8 6.5 11.8C9 11.8 11.4 11.4 12.5 9.8" fill="none" stroke="#fff" stroke-width="1.1"/></svg>
<span style="left:1029.20px;top:692.00px;font-size:13px;line-height:16px;color:#1c2127;letter-spacing:0.024px;">Convert</span>
<svg style="left:1084.6px;top:695.8px;" width="9.6" height="5.8" viewBox="0 0 10 6"><path d="M1 1L5 5L9 1" fill="none" stroke="#4f5863" stroke-width="1.8" stroke-linecap="round" stroke-linejoin="round"/></svg>
<div style="left:291.3px;top:728.4px;width:821.5px;height:30.8px;background:#fefefc;border:1px solid #d3d8de;border-radius:3px"></div>
<svg style="left:303px;top:737.2px;" width="16.2" height="13.8" viewBox="0 0 16 14"><defs><linearGradient id="ga303" x1="0" y1="0" x2="1" y2="1"><stop offset="0" stop-color="#6a63c8"/><stop offset="1" stop-color="#8d7fd6"/></linearGradient></defs><g fill="none" stroke="url(#ga303)" stroke-width="1.0" stroke-linecap="round" stroke-linejoin="round"><path d="M1.6 0.6H14.4M1.6 13.4H14.4"/><path d="M1.6 0.6Q0.2 0.8 0.9 2.2L6.6 12.6Q7 13.4 7.6 13.4M7.6 0.6Q7 0.6 6.6 1.4L0.9 11.8Q0.2 13.2 1.6 13.4"/><path d="M14.4 0.6Q15.8 0.8 15.1 2.2L9.4 12.6Q9 13.4 8.4 13.4M8.4 0.6Q9 0.6 9.4 1.4L15.1 11.8Q15.8 13.2 14.4 13.4"/></g></svg>
<span style="left:335.00px;top:737.00px;font-size:13px;line-height:16px;color:#5f6b7c;letter-spacing:0.104px;">Enter a query to continue the exploration</span>
<div style="left:1003.2px;top:733.8px;width:33.4px;height:20.2px;background:#ebebf6;border-radius:2px"></div>
<span style="left:1009.20px;top:736.00px;font-size:12px;line-height:16px;color:#5642a6;letter-spacing:-0.772px;">Beta</span>
<svg style="left:1044px;top:736px;" width="16" height="16" viewBox="0 0 16 16"><circle cx="8" cy="8" r="8" fill="#454d57"/><text x="8" y="12.3" font-size="12.5" font-weight="700" text-anchor="middle" fill="#fff" font-family="Liberation Sans, sans-serif">?</text></svg>
<div style="left:1067px;top:732.2px;width:39.8px;height:23.4px;background:#e3e5e8;border:1px solid #c5c9cf;border-radius:2px"></div>
<span style="left:1076.00px;top:737.00px;font-size:13px;line-height:16px;color:#1c2127;letter-spacing:-0.380px;">Add</span>
<div style="left:1418px;top:0px;width:400px;height:826px;background:#fefefc;border-left:1px solid #d6d9dd"></div>
<div style="left:1419px;top:36px;width:399px;height:1px;background:#d6d9dd"></div>
<svg style="left:1436px;top:9px;" width="16" height="16" viewBox="0 0 16 16"><g transform="rotate(0 8 8)"><path d="M14.5 8H2M7 3L2 8L7 13" fill="none" stroke="#454d57" stroke-width="1.7" stroke-linecap="round" stroke-linejoin="round"/></g></svg>
<div style="left:1542.4px;top:7.2px;width:157.4px;height:18.6px;background:#eef0f2;border-radius:9.3px"></div>
<svg style="left:1552.2px;top:9.6px;" width="12" height="12" viewBox="0 0 16 16"><g stroke="#1c2127" stroke-linecap="round" fill="none"><path d="M1.4 2.2H14.6" stroke-width="2.99"/><path d="M3.2 7.6H12.8" stroke-width="2.73"/><path d="M5.6 13.8H10.4" stroke-width="2.99"/><path d="M8 2.6V13.4" stroke-width="2.73"/></g></svg>
<span style="left:1572.80px;top:9.00px;font-size:10.5px;line-height:16px;color:#1c2127;letter-spacing:-0.361px;">TRANSFORM TABLE</span>
<svg style="left:1678.2px;top:10.2px;" width="11.7" height="11.7" viewBox="0 0 16 16"><circle cx="8" cy="8" r="8" fill="#1c2127"/><text x="8" y="12.3" font-size="12.5" font-weight="700" text-anchor="middle" fill="#fff" font-family="Liberation Sans, sans-serif">?</text></svg>
<svg style="left:1790px;top:9px;" width="16" height="16" viewBox="0 0 16 16"><path d="M3.6 3.6L12.4 12.4M12.4 3.6L3.6 12.4" stroke="#454d57" stroke-width="1.7" stroke-linecap="round"/></svg>
<div style="left:1434.3px;top:52px;width:49.6px;height:49.6px;border:1px solid #cfd3d8;border-radius:3px;background:#fefefc"></div>
<span style="left:1445.35px;top:70.00px;font-size:14.5px;line-height:16px;color:#5f6b7c;font-weight:700;-webkit-text-stroke:0;letter-spacing:-0.643px;">$BQ</span>
<span style="left:1499.60px;top:54.00px;font-size:16.5px;line-height:20px;color:#1c2127;font-weight:700;-webkit-text-stroke:0;letter-spacing:-0.140px;">Transform table</span>
<div style="left:1495.4px;top:81.3px;width:96.2px;height:19.2px;border:1px solid #d3d8de;border-radius:2px;background:#fefefc"></div>
<div style="left:1573px;top:82.3px;width:1px;height:17.2px;background:#d3d8de"></div>
<svg style="left:1501.6px;top:85.8px;" width="10.8" height="10.8" viewBox="0 0 11 11"><rect x="0.7" y="3.3" width="7" height="7" rx="1" fill="none" stroke="#5f6b7c" stroke-width="1.3"/><path d="M3.4 3V1.6A0.9 0.9 0 0 1 4.3 0.7H9.4A0.9 0.9 0 0 1 10.3 1.6V6.7A0.9 0.9 0 0 1 9.4 7.6H8" fill="none" stroke="#5f6b7c" stroke-width="1.3"/><rect x="2.6" y="5.2" width="3.2" height="3.2" fill="#5f6b7c"/></svg>
<span style="left:1517.40px;top:83.00px;font-size:12px;line-height:16px;color:#56606b;letter-spacing:-0.483px;">Object set</span>
<span style="left:1576.80px;top:83.00px;font-size:11.5px;line-height:16px;color:#8a929b;letter-spacing:-0.862px;">+4</span>
<svg style="left:1598px;top:87px;" width="9" height="9" viewBox="0 0 16 16"><g transform="rotate(180 8 8)"><path d="M14.5 8H2M7 3L2 8L7 13" fill="none" stroke="#b4bac2" stroke-width="1.8" stroke-linecap="round" stroke-linejoin="round"/></g></svg>
<div style="left:1613.2px;top:81.3px;width:108.8px;height:19.2px;border:1px solid #d3d8de;border-radius:2px;background:#fefefc"></div>
<svg style="left:1620.8px;top:86px;" width="10.4" height="10.4" viewBox="0 0 16 16"><g stroke="#5f6b7c" stroke-linecap="round" fill="none"><path d="M1.4 2.2H14.6" stroke-width="2.30"/><path d="M3.2 7.6H12.8" stroke-width="2.10"/><path d="M5.6 13.8H10.4" stroke-width="2.30"/><path d="M8 2.6V13.4" stroke-width="2.10"/></g></svg>
<span style="left:1635.70px;top:83.00px;font-size:12px;line-height:16px;color:#56606b;letter-spacing:-0.346px;">Transform table</span>
<div style="left:1419px;top:115.8px;width:399px;height:1px;background:#dcdfe3"></div>
<span style="left:1433.90px;top:128.00px;font-size:13px;line-height:16px;color:#2b5aa8;letter-spacing:-0.192px;">Data</span>
<div style="left:1433.9px;top:149.6px;width:27px;height:3.2px;background:#2b5aa8"></div>
<span style="left:1481.00px;top:128.00px;font-size:13px;line-height:16px;color:#1c2127;letter-spacing:0.025px;">Display</span>
<div style="left:1419px;top:152.4px;width:399px;height:1px;background:#dcdfe3"></div>
<svg style="left:1433.8px;top:171.1px;" width="14.4" height="14.4" viewBox="0 0 16 16"><path d="M0.9 4.2H13.8M4.6 4.2L10 11.2H13.8" fill="none" stroke="#1c2127" stroke-width="1.9" stroke-linejoin="round" stroke-linecap="round"/><path d="M12.4 2L14.9 4.2L12.4 6.4M12.4 9L14.9 11.2L12.4 13.4" fill="none" stroke="#1c2127" stroke-width="1.8" stroke-linejoin="round" stroke-linecap="round"/></svg>
<span style="left:1453.20px;top:170.00px;font-size:13px;line-height:16px;color:#404854;letter-spacing:-0.344px;">New transform table</span>
<span style="left:1788.20px;top:170.00px;font-size:12px;line-height:16px;color:#2f7f74;letter-spacing:-0.393px;">+</span>
<span style="left:1797.20px;top:170.00px;font-size:13px;line-height:16px;color:#2f7f74;letter-spacing:-0.405px;">1</span>
<svg style="left:1613.6px;top:198.6px;" width="10.4" height="13.2" viewBox="0 0 11 14"><path d="M5.5 1V12.6M1 8.2L5.5 12.8L10 8.2" fill="none" stroke="#c6cad0" stroke-width="1.5" stroke-linecap="round" stroke-linejoin="round"/></svg>
<svg style="left:1433.8px;top:225.8px;" width="14.2" height="12.425" viewBox="0 0 16 14"><path d="M1.2 1.6V12.8H15.2" fill="none" stroke="#1c2127" stroke-width="2" stroke-linecap="round" stroke-linejoin="round"/><path d="M2.6 10.2L5.4 6.6L7.8 9.6L9.8 8" fill="none" stroke="#1c2127" stroke-width="1.7" stroke-linecap="round" stroke-linejoin="round"/><path d="M7.9 0.2H16L13.4 3.6V7.8L10.9 6.6V3.6Z" fill="#1c2127"/></svg>
<span style="left:1453.20px;top:224.00px;font-size:13px;line-height:16px;color:#404854;letter-spacing:-0.331px;">Filter time series</span>
<span style="left:1788.20px;top:224.00px;font-size:12px;line-height:16px;color:#2f7f74;letter-spacing:-0.393px;">+</span>
<span style="left:1797.20px;top:224.00px;font-size:13px;line-height:16px;color:#2f7f74;letter-spacing:-0.405px;">1</span>
<svg style="left:1613.6px;top:252.8px;" width="10.4" height="13.2" viewBox="0 0 11 14"><path d="M5.5 1V12.6M1 8.2L5.5 12.8L10 8.2" fill="none" stroke="#c6cad0" stroke-width="1.5" stroke-linecap="round" stroke-linejoin="round"/></svg>
<div style="left:1419px;top:291.4px;width:399px;height:1px;background:#dcdfe3"></div>
<div style="left:1428.8px;top:302.2px;width:379px;height:29.8px;background:#2c61c5;border-radius:2px"></div>
<span style="left:1560.20px;top:310.00px;font-size:13px;line-height:16px;color:#fff;-webkit-text-stroke:0.45px;letter-spacing:0.153px;">Add Transformation</span>
<div style="left:1419px;top:700px;width:399px;height:45.6px;background:#f6f7f9;border-top:1px solid #dcdfe3;border-bottom:1px solid #dcdfe3"></div>
<span style="left:1429.40px;top:716.00px;font-size:12.5px;line-height:16px;color:#5f6b7c;letter-spacing:-0.612px;">DEPENDENCIES</span>
<svg style="left:1588.4px;top:715px;" width="16.4" height="16.4" viewBox="0 0 16 16"><rect x="0.3" y="0.4" width="7.4" height="3.5" rx="1" fill="#555e68"/><rect x="0.3" y="12.1" width="7.4" height="3.5" rx="1" fill="#555e68"/><rect x="9" y="5.3" width="7" height="5.4" rx="1" fill="#555e68"/><path d="M4.6 3.4L9.6 8L4.6 12.6" fill="none" stroke="#555e68" stroke-width="1.5" stroke-linejoin="round"/></svg>
<span style="left:1612.00px;top:716.00px;font-size:13px;line-height:16px;color:#1c2127;letter-spacing:-0.012px;">View dependencies in graph</span>
<svg style="left:1795px;top:720.4px;" width="9.6" height="5.8" viewBox="0 0 10 6"><path d="M1 1L5 5L9 1" fill="none" stroke="#404854" stroke-width="1.8" stroke-linecap="round" stroke-linejoin="round"/></svg>
<svg style="left:1430px;top:763.8px;" width="14.5" height="14.5" viewBox="0 0 16 16"><g transform="rotate(90 8 8)"><path d="M14.5 8H2M7 3L2 8L7 13" fill="none" stroke="#7d8690" stroke-width="1.7" stroke-linecap="round" stroke-linejoin="round"/></g></svg>
<div style="left:1450.6px;top:756.6px;width:357.2px;height:28.8px;border:1px solid #e1e4e8;border-radius:3px;background:#fefefc"></div>
<div style="left:1457px;top:763.2px;width:37.6px;height:15.2px;border:1px solid #c3c8ce;border-radius:2px;background:#fefefc"></div>
<span style="left:1466.60px;top:763.00px;font-size:11px;line-height:16px;color:#5f6b7c;letter-spacing:-0.532px;">$BK</span>
<svg style="left:1500.1px;top:762.6px;" width="16" height="16" viewBox="0 0 16 16"><g stroke="#1c2127" stroke-linecap="round" fill="none"><path d="M1.4 2.2H14.6" stroke-width="2.99"/><path d="M3.2 7.6H12.8" stroke-width="2.73"/><path d="M5.6 13.8H10.4" stroke-width="2.99"/><path d="M8 2.6V13.4" stroke-width="2.73"/></g></svg>
<span style="left:1521.40px;top:763.00px;font-size:13px;line-height:16px;color:#1c2127;letter-spacing:-0.364px;">Transform table</span>
<div style="left:1429.2px;top:791.3px;width:378.8px;height:30.2px;border:1.2px solid #344f7c;border-radius:3.5px;background:#dde8f5"></div>
<div style="left:1436.3px;top:799.3px;width:37.5px;height:15.4px;border:1px solid #c3c8ce;border-radius:2px;background:#fefefc"></div>
<span style="left:1445.00px;top:799.00px;font-size:11px;line-height:16px;color:#5f6b7c;letter-spacing:-0.605px;">$BQ</span>
<svg style="left:1479.1px;top:798.4px;" width="16" height="16" viewBox="0 0 16 16"><g stroke="#1c2127" stroke-linecap="round" fill="none"><path d="M1.4 2.2H14.6" stroke-width="2.99"/><path d="M3.2 7.6H12.8" stroke-width="2.73"/><path d="M5.6 13.8H10.4" stroke-width="2.99"/><path d="M8 2.6V13.4" stroke-width="2.73"/></g></svg>
<span style="left:1500.90px;top:798.00px;font-size:13px;line-height:16px;color:#1c2127;letter-spacing:-0.391px;">Transform table</span>
<svg style="left:1260.9px;top:285.2px;" width="9" height="15" viewBox="0 0 9 15"><path d="M0 0V10.6L2.5 8.5L4.9 14L7 13.1L4.7 7.8L8.3 7.5Z" fill="#0d1117" stroke="#fff" stroke-width="0.7" stroke-linejoin="round" style="filter:drop-shadow(0 1px 1px rgba(0,0,0,.25))"/></svg>
</body></html>
